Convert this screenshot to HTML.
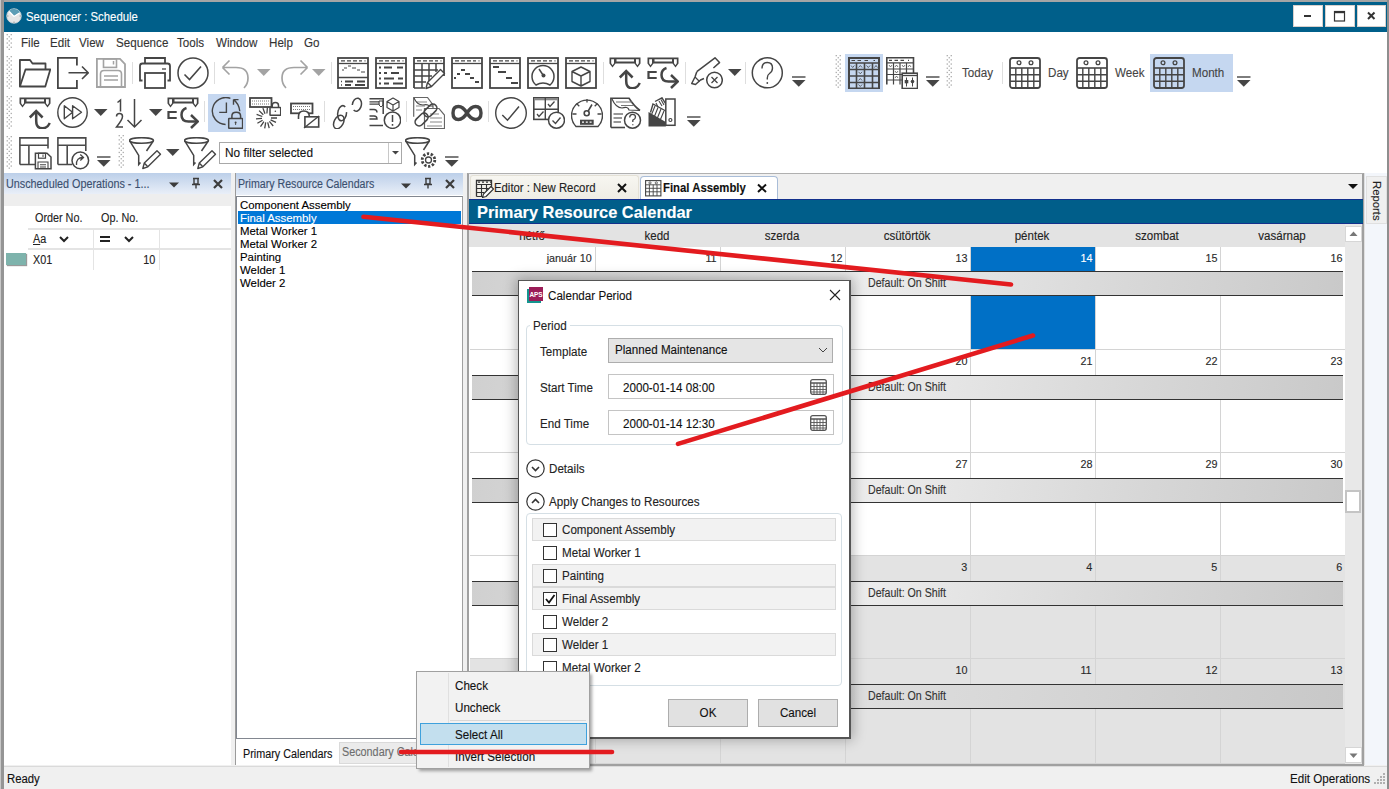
<!DOCTYPE html><html><head><meta charset="utf-8"><style>
html,body{margin:0;padding:0;}
body{width:1389px;height:789px;position:relative;overflow:hidden;background:#fff;font-family:"Liberation Sans", sans-serif;}
div{box-sizing:border-box;-webkit-text-stroke:0.12px currentColor;}
</style></head><body>
<div style="position:absolute;left:0px;top:0px;width:1389px;height:789px;background:#f0f0f0"></div>
<div style="position:absolute;left:0px;top:0px;width:1389px;height:2px;background:#a5a5a5"></div>
<div style="position:absolute;left:0px;top:0px;width:4px;height:789px;background:#959595;border-left:1px solid #c8c8c8"></div>
<div style="position:absolute;left:1387px;top:0px;width:2px;height:789px;background:#8e8e8e"></div>
<div style="position:absolute;left:4px;top:2px;width:1383px;height:30px;background:#005f8a"></div>
<div style="position:absolute;left:26px;top:10px;font-size:12.5px;line-height:14px;height:14px;color:#fff;white-space:nowrap;transform-origin:0 0;transform:scaleX(0.91);">Sequencer : Schedule</div>
<div style="position:absolute;left:4px;top:32px;width:1383px;height:141px;background:#fff"></div>
<div style="position:absolute;left:1293px;top:5px;width:30px;height:22px;background:#fff;border:1px solid #d8d0cc"></div>
<div style="position:absolute;left:1325px;top:5px;width:30px;height:22px;background:#fff;border:1px solid #d8d0cc"></div>
<div style="position:absolute;left:1357px;top:5px;width:29px;height:22px;background:#fff;border:1px solid #d8d0cc"></div>
<svg style="position:absolute;left:1293px;top:5px;" width="30" height="22" viewBox="0 0 30 22" fill="none" stroke="#444" stroke-width="1.5"><path d="M11 11 H18" stroke="#333" stroke-width="2"/></svg>
<svg style="position:absolute;left:1325px;top:5px;" width="30" height="22" viewBox="0 0 30 22" fill="none" stroke="#444" stroke-width="1.5"><rect x="9.5" y="6.5" width="10" height="9.5" stroke="#333" stroke-width="1.2"/><path d="M9 7.3 H20" stroke="#333" stroke-width="1.8"/></svg>
<svg style="position:absolute;left:1357px;top:5px;" width="29" height="22" viewBox="0 0 29 22" fill="none" stroke="#444" stroke-width="1.5"><path d="M11 7.5 L17.5 14 M17.5 7.5 L11 14" stroke="#333" stroke-width="2"/></svg>
<svg style="position:absolute;left:6px;top:8px;" width="16" height="16" viewBox="0 0 16 16" fill="none" stroke="#444" stroke-width="1.5"><circle cx="8" cy="8" r="7.3" fill="#e6e6e6" stroke="#c9d3d8" stroke-width="0.8"/><path d="M8 8 L3 3 A7.1 7.1 0 0 1 14.2 4.4 Z" fill="#5d9db5" stroke="none"/><path d="M8 8.5 L3.2 3.5 M8 8.5 L13.8 4.8" stroke="#fff" stroke-width="1.3"/><path d="M8 13.5 V15 M1 8 H2.5 M13.5 8 H15" stroke="#888" stroke-width="0.8"/></svg>
<div style="position:absolute;left:21px;top:36px;font-size:12.5px;line-height:14px;height:14px;color:#333;white-space:nowrap;transform-origin:0 0;transform:scaleX(0.93);">File</div>
<div style="position:absolute;left:50px;top:36px;font-size:12.5px;line-height:14px;height:14px;color:#333;white-space:nowrap;transform-origin:0 0;transform:scaleX(0.93);">Edit</div>
<div style="position:absolute;left:79px;top:36px;font-size:12.5px;line-height:14px;height:14px;color:#333;white-space:nowrap;transform-origin:0 0;transform:scaleX(0.93);">View</div>
<div style="position:absolute;left:116px;top:36px;font-size:12.5px;line-height:14px;height:14px;color:#333;white-space:nowrap;transform-origin:0 0;transform:scaleX(0.93);">Sequence</div>
<div style="position:absolute;left:177px;top:36px;font-size:12.5px;line-height:14px;height:14px;color:#333;white-space:nowrap;transform-origin:0 0;transform:scaleX(0.93);">Tools</div>
<div style="position:absolute;left:216px;top:36px;font-size:12.5px;line-height:14px;height:14px;color:#333;white-space:nowrap;transform-origin:0 0;transform:scaleX(0.93);">Window</div>
<div style="position:absolute;left:269px;top:36px;font-size:12.5px;line-height:14px;height:14px;color:#333;white-space:nowrap;transform-origin:0 0;transform:scaleX(0.93);">Help</div>
<div style="position:absolute;left:304px;top:36px;font-size:12.5px;line-height:14px;height:14px;color:#333;white-space:nowrap;transform-origin:0 0;transform:scaleX(0.93);">Go</div>
<svg style="position:absolute;left:6px;top:34px;stroke:none" width="7" height="18" viewBox="0 0 7 18" fill="none" stroke="#444" stroke-width="1.5"><rect x="0.6" y="0.0" width="1.3" height="1.3" fill="#aaaaaa"/><rect x="4.6" y="0.0" width="1.3" height="1.3" fill="#aaaaaa"/><rect x="2.6" y="2.1" width="1.3" height="1.3" fill="#aaaaaa"/><rect x="0.6" y="4.2" width="1.3" height="1.3" fill="#aaaaaa"/><rect x="4.6" y="4.2" width="1.3" height="1.3" fill="#aaaaaa"/><rect x="2.6" y="6.3" width="1.3" height="1.3" fill="#aaaaaa"/><rect x="0.6" y="8.4" width="1.3" height="1.3" fill="#aaaaaa"/><rect x="4.6" y="8.4" width="1.3" height="1.3" fill="#aaaaaa"/><rect x="2.6" y="10.5" width="1.3" height="1.3" fill="#aaaaaa"/><rect x="0.6" y="12.6" width="1.3" height="1.3" fill="#aaaaaa"/><rect x="4.6" y="12.6" width="1.3" height="1.3" fill="#aaaaaa"/><rect x="2.6" y="14.7" width="1.3" height="1.3" fill="#aaaaaa"/></svg>
<svg style="position:absolute;left:6px;top:56px;stroke:none" width="7" height="34" viewBox="0 0 7 34" fill="none" stroke="#444" stroke-width="1.5"><rect x="0.6" y="0.0" width="1.3" height="1.3" fill="#aaaaaa"/><rect x="4.6" y="0.0" width="1.3" height="1.3" fill="#aaaaaa"/><rect x="2.6" y="2.1" width="1.3" height="1.3" fill="#aaaaaa"/><rect x="0.6" y="4.2" width="1.3" height="1.3" fill="#aaaaaa"/><rect x="4.6" y="4.2" width="1.3" height="1.3" fill="#aaaaaa"/><rect x="2.6" y="6.3" width="1.3" height="1.3" fill="#aaaaaa"/><rect x="0.6" y="8.4" width="1.3" height="1.3" fill="#aaaaaa"/><rect x="4.6" y="8.4" width="1.3" height="1.3" fill="#aaaaaa"/><rect x="2.6" y="10.5" width="1.3" height="1.3" fill="#aaaaaa"/><rect x="0.6" y="12.6" width="1.3" height="1.3" fill="#aaaaaa"/><rect x="4.6" y="12.6" width="1.3" height="1.3" fill="#aaaaaa"/><rect x="2.6" y="14.7" width="1.3" height="1.3" fill="#aaaaaa"/><rect x="0.6" y="16.8" width="1.3" height="1.3" fill="#aaaaaa"/><rect x="4.6" y="16.8" width="1.3" height="1.3" fill="#aaaaaa"/><rect x="2.6" y="18.9" width="1.3" height="1.3" fill="#aaaaaa"/><rect x="0.6" y="21.0" width="1.3" height="1.3" fill="#aaaaaa"/><rect x="4.6" y="21.0" width="1.3" height="1.3" fill="#aaaaaa"/><rect x="2.6" y="23.1" width="1.3" height="1.3" fill="#aaaaaa"/><rect x="0.6" y="25.2" width="1.3" height="1.3" fill="#aaaaaa"/><rect x="4.6" y="25.2" width="1.3" height="1.3" fill="#aaaaaa"/><rect x="2.6" y="27.3" width="1.3" height="1.3" fill="#aaaaaa"/><rect x="0.6" y="29.4" width="1.3" height="1.3" fill="#aaaaaa"/><rect x="4.6" y="29.4" width="1.3" height="1.3" fill="#aaaaaa"/><rect x="2.6" y="31.5" width="1.3" height="1.3" fill="#aaaaaa"/></svg>
<svg style="position:absolute;left:6px;top:96px;stroke:none" width="7" height="34" viewBox="0 0 7 34" fill="none" stroke="#444" stroke-width="1.5"><rect x="0.6" y="0.0" width="1.3" height="1.3" fill="#aaaaaa"/><rect x="4.6" y="0.0" width="1.3" height="1.3" fill="#aaaaaa"/><rect x="2.6" y="2.1" width="1.3" height="1.3" fill="#aaaaaa"/><rect x="0.6" y="4.2" width="1.3" height="1.3" fill="#aaaaaa"/><rect x="4.6" y="4.2" width="1.3" height="1.3" fill="#aaaaaa"/><rect x="2.6" y="6.3" width="1.3" height="1.3" fill="#aaaaaa"/><rect x="0.6" y="8.4" width="1.3" height="1.3" fill="#aaaaaa"/><rect x="4.6" y="8.4" width="1.3" height="1.3" fill="#aaaaaa"/><rect x="2.6" y="10.5" width="1.3" height="1.3" fill="#aaaaaa"/><rect x="0.6" y="12.6" width="1.3" height="1.3" fill="#aaaaaa"/><rect x="4.6" y="12.6" width="1.3" height="1.3" fill="#aaaaaa"/><rect x="2.6" y="14.7" width="1.3" height="1.3" fill="#aaaaaa"/><rect x="0.6" y="16.8" width="1.3" height="1.3" fill="#aaaaaa"/><rect x="4.6" y="16.8" width="1.3" height="1.3" fill="#aaaaaa"/><rect x="2.6" y="18.9" width="1.3" height="1.3" fill="#aaaaaa"/><rect x="0.6" y="21.0" width="1.3" height="1.3" fill="#aaaaaa"/><rect x="4.6" y="21.0" width="1.3" height="1.3" fill="#aaaaaa"/><rect x="2.6" y="23.1" width="1.3" height="1.3" fill="#aaaaaa"/><rect x="0.6" y="25.2" width="1.3" height="1.3" fill="#aaaaaa"/><rect x="4.6" y="25.2" width="1.3" height="1.3" fill="#aaaaaa"/><rect x="2.6" y="27.3" width="1.3" height="1.3" fill="#aaaaaa"/><rect x="0.6" y="29.4" width="1.3" height="1.3" fill="#aaaaaa"/><rect x="4.6" y="29.4" width="1.3" height="1.3" fill="#aaaaaa"/><rect x="2.6" y="31.5" width="1.3" height="1.3" fill="#aaaaaa"/></svg>
<svg style="position:absolute;left:6px;top:136px;stroke:none" width="7" height="34" viewBox="0 0 7 34" fill="none" stroke="#444" stroke-width="1.5"><rect x="0.6" y="0.0" width="1.3" height="1.3" fill="#aaaaaa"/><rect x="4.6" y="0.0" width="1.3" height="1.3" fill="#aaaaaa"/><rect x="2.6" y="2.1" width="1.3" height="1.3" fill="#aaaaaa"/><rect x="0.6" y="4.2" width="1.3" height="1.3" fill="#aaaaaa"/><rect x="4.6" y="4.2" width="1.3" height="1.3" fill="#aaaaaa"/><rect x="2.6" y="6.3" width="1.3" height="1.3" fill="#aaaaaa"/><rect x="0.6" y="8.4" width="1.3" height="1.3" fill="#aaaaaa"/><rect x="4.6" y="8.4" width="1.3" height="1.3" fill="#aaaaaa"/><rect x="2.6" y="10.5" width="1.3" height="1.3" fill="#aaaaaa"/><rect x="0.6" y="12.6" width="1.3" height="1.3" fill="#aaaaaa"/><rect x="4.6" y="12.6" width="1.3" height="1.3" fill="#aaaaaa"/><rect x="2.6" y="14.7" width="1.3" height="1.3" fill="#aaaaaa"/><rect x="0.6" y="16.8" width="1.3" height="1.3" fill="#aaaaaa"/><rect x="4.6" y="16.8" width="1.3" height="1.3" fill="#aaaaaa"/><rect x="2.6" y="18.9" width="1.3" height="1.3" fill="#aaaaaa"/><rect x="0.6" y="21.0" width="1.3" height="1.3" fill="#aaaaaa"/><rect x="4.6" y="21.0" width="1.3" height="1.3" fill="#aaaaaa"/><rect x="2.6" y="23.1" width="1.3" height="1.3" fill="#aaaaaa"/><rect x="0.6" y="25.2" width="1.3" height="1.3" fill="#aaaaaa"/><rect x="4.6" y="25.2" width="1.3" height="1.3" fill="#aaaaaa"/><rect x="2.6" y="27.3" width="1.3" height="1.3" fill="#aaaaaa"/><rect x="0.6" y="29.4" width="1.3" height="1.3" fill="#aaaaaa"/><rect x="4.6" y="29.4" width="1.3" height="1.3" fill="#aaaaaa"/><rect x="2.6" y="31.5" width="1.3" height="1.3" fill="#aaaaaa"/></svg>
<svg style="position:absolute;left:118px;top:135px;stroke:none" width="7" height="34" viewBox="0 0 7 34" fill="none" stroke="#444" stroke-width="1.5"><rect x="0.6" y="0.0" width="1.3" height="1.3" fill="#aaaaaa"/><rect x="4.6" y="0.0" width="1.3" height="1.3" fill="#aaaaaa"/><rect x="2.6" y="2.1" width="1.3" height="1.3" fill="#aaaaaa"/><rect x="0.6" y="4.2" width="1.3" height="1.3" fill="#aaaaaa"/><rect x="4.6" y="4.2" width="1.3" height="1.3" fill="#aaaaaa"/><rect x="2.6" y="6.3" width="1.3" height="1.3" fill="#aaaaaa"/><rect x="0.6" y="8.4" width="1.3" height="1.3" fill="#aaaaaa"/><rect x="4.6" y="8.4" width="1.3" height="1.3" fill="#aaaaaa"/><rect x="2.6" y="10.5" width="1.3" height="1.3" fill="#aaaaaa"/><rect x="0.6" y="12.6" width="1.3" height="1.3" fill="#aaaaaa"/><rect x="4.6" y="12.6" width="1.3" height="1.3" fill="#aaaaaa"/><rect x="2.6" y="14.7" width="1.3" height="1.3" fill="#aaaaaa"/><rect x="0.6" y="16.8" width="1.3" height="1.3" fill="#aaaaaa"/><rect x="4.6" y="16.8" width="1.3" height="1.3" fill="#aaaaaa"/><rect x="2.6" y="18.9" width="1.3" height="1.3" fill="#aaaaaa"/><rect x="0.6" y="21.0" width="1.3" height="1.3" fill="#aaaaaa"/><rect x="4.6" y="21.0" width="1.3" height="1.3" fill="#aaaaaa"/><rect x="2.6" y="23.1" width="1.3" height="1.3" fill="#aaaaaa"/><rect x="0.6" y="25.2" width="1.3" height="1.3" fill="#aaaaaa"/><rect x="4.6" y="25.2" width="1.3" height="1.3" fill="#aaaaaa"/><rect x="2.6" y="27.3" width="1.3" height="1.3" fill="#aaaaaa"/><rect x="0.6" y="29.4" width="1.3" height="1.3" fill="#aaaaaa"/><rect x="4.6" y="29.4" width="1.3" height="1.3" fill="#aaaaaa"/><rect x="2.6" y="31.5" width="1.3" height="1.3" fill="#aaaaaa"/></svg>
<svg style="position:absolute;left:835px;top:55px;stroke:none" width="7" height="34" viewBox="0 0 7 34" fill="none" stroke="#444" stroke-width="1.5"><rect x="0.6" y="0.0" width="1.3" height="1.3" fill="#aaaaaa"/><rect x="4.6" y="0.0" width="1.3" height="1.3" fill="#aaaaaa"/><rect x="2.6" y="2.1" width="1.3" height="1.3" fill="#aaaaaa"/><rect x="0.6" y="4.2" width="1.3" height="1.3" fill="#aaaaaa"/><rect x="4.6" y="4.2" width="1.3" height="1.3" fill="#aaaaaa"/><rect x="2.6" y="6.3" width="1.3" height="1.3" fill="#aaaaaa"/><rect x="0.6" y="8.4" width="1.3" height="1.3" fill="#aaaaaa"/><rect x="4.6" y="8.4" width="1.3" height="1.3" fill="#aaaaaa"/><rect x="2.6" y="10.5" width="1.3" height="1.3" fill="#aaaaaa"/><rect x="0.6" y="12.6" width="1.3" height="1.3" fill="#aaaaaa"/><rect x="4.6" y="12.6" width="1.3" height="1.3" fill="#aaaaaa"/><rect x="2.6" y="14.7" width="1.3" height="1.3" fill="#aaaaaa"/><rect x="0.6" y="16.8" width="1.3" height="1.3" fill="#aaaaaa"/><rect x="4.6" y="16.8" width="1.3" height="1.3" fill="#aaaaaa"/><rect x="2.6" y="18.9" width="1.3" height="1.3" fill="#aaaaaa"/><rect x="0.6" y="21.0" width="1.3" height="1.3" fill="#aaaaaa"/><rect x="4.6" y="21.0" width="1.3" height="1.3" fill="#aaaaaa"/><rect x="2.6" y="23.1" width="1.3" height="1.3" fill="#aaaaaa"/><rect x="0.6" y="25.2" width="1.3" height="1.3" fill="#aaaaaa"/><rect x="4.6" y="25.2" width="1.3" height="1.3" fill="#aaaaaa"/><rect x="2.6" y="27.3" width="1.3" height="1.3" fill="#aaaaaa"/><rect x="0.6" y="29.4" width="1.3" height="1.3" fill="#aaaaaa"/><rect x="4.6" y="29.4" width="1.3" height="1.3" fill="#aaaaaa"/><rect x="2.6" y="31.5" width="1.3" height="1.3" fill="#aaaaaa"/></svg>
<svg style="position:absolute;left:946px;top:55px;stroke:none" width="7" height="34" viewBox="0 0 7 34" fill="none" stroke="#444" stroke-width="1.5"><rect x="0.6" y="0.0" width="1.3" height="1.3" fill="#aaaaaa"/><rect x="4.6" y="0.0" width="1.3" height="1.3" fill="#aaaaaa"/><rect x="2.6" y="2.1" width="1.3" height="1.3" fill="#aaaaaa"/><rect x="0.6" y="4.2" width="1.3" height="1.3" fill="#aaaaaa"/><rect x="4.6" y="4.2" width="1.3" height="1.3" fill="#aaaaaa"/><rect x="2.6" y="6.3" width="1.3" height="1.3" fill="#aaaaaa"/><rect x="0.6" y="8.4" width="1.3" height="1.3" fill="#aaaaaa"/><rect x="4.6" y="8.4" width="1.3" height="1.3" fill="#aaaaaa"/><rect x="2.6" y="10.5" width="1.3" height="1.3" fill="#aaaaaa"/><rect x="0.6" y="12.6" width="1.3" height="1.3" fill="#aaaaaa"/><rect x="4.6" y="12.6" width="1.3" height="1.3" fill="#aaaaaa"/><rect x="2.6" y="14.7" width="1.3" height="1.3" fill="#aaaaaa"/><rect x="0.6" y="16.8" width="1.3" height="1.3" fill="#aaaaaa"/><rect x="4.6" y="16.8" width="1.3" height="1.3" fill="#aaaaaa"/><rect x="2.6" y="18.9" width="1.3" height="1.3" fill="#aaaaaa"/><rect x="0.6" y="21.0" width="1.3" height="1.3" fill="#aaaaaa"/><rect x="4.6" y="21.0" width="1.3" height="1.3" fill="#aaaaaa"/><rect x="2.6" y="23.1" width="1.3" height="1.3" fill="#aaaaaa"/><rect x="0.6" y="25.2" width="1.3" height="1.3" fill="#aaaaaa"/><rect x="4.6" y="25.2" width="1.3" height="1.3" fill="#aaaaaa"/><rect x="2.6" y="27.3" width="1.3" height="1.3" fill="#aaaaaa"/><rect x="0.6" y="29.4" width="1.3" height="1.3" fill="#aaaaaa"/><rect x="4.6" y="29.4" width="1.3" height="1.3" fill="#aaaaaa"/><rect x="2.6" y="31.5" width="1.3" height="1.3" fill="#aaaaaa"/></svg>
<svg style="position:absolute;left:19px;top:57px;" width="32" height="32" viewBox="0 0 32 32" fill="none" stroke="#444" stroke-width="1.5"><path d="M0.9 29.5 V3 H11 L13.5 6.5 H26.5 V12.5" stroke="#454545" stroke-width="1.8" stroke-linejoin="round"/><path d="M0.9 29.5 L6.5 12.5 H31.3 L26.3 29.5 Z" stroke="#454545" stroke-width="1.8" stroke-linejoin="round"/></svg>
<svg style="position:absolute;left:57px;top:57px;" width="32" height="32" viewBox="0 0 32 32" fill="none" stroke="#444" stroke-width="1.5"><path d="M19.9 8.5 V0.9 H0.9 V31.1 H19.9 V23" stroke="#454545" stroke-width="1.8"/><path d="M11.5 15.8 H31 M25 9.5 L31.2 15.8 L25 22" stroke="#454545" stroke-width="1.6"/></svg>
<svg style="position:absolute;left:95px;top:57px;" width="32" height="32" viewBox="0 0 32 32" fill="none" stroke="#444" stroke-width="1.5"><path d="M1.9 1.9 H25 L30 7 V30 H1.9 Z" stroke="#a3a3a3" stroke-width="1.8"/><rect x="8.5" y="1.9" width="13" height="8.5" stroke="#a3a3a3" stroke-width="1.6"/><path d="M18.5 4 V7.5" stroke="#a3a3a3" stroke-width="1.5"/><path d="M5.5 30 V17 Q5.5 13.5 9 13.5 H23 Q26.5 13.5 26.5 17 V30" stroke="#a3a3a3" stroke-width="1.6"/><path d="M9 19 H23 M9 23 H23" stroke="#a3a3a3" stroke-width="1.4"/></svg>
<div style="position:absolute;left:132px;top:62px;width:1px;height:22px;background:#dedede"></div>
<svg style="position:absolute;left:139px;top:57px;" width="32" height="32" viewBox="0 0 32 32" fill="none" stroke="#444" stroke-width="1.5"><path d="M6 6 V1 H26 V6" stroke="#454545" stroke-width="1.8"/><path d="M3.5 23.5 H1 V9 Q1 6.5 3.5 6.5 H28.5 Q31 6.5 31 9 V23.5 H28.5" stroke="#454545" stroke-width="1.8"/><rect x="6" y="16" width="20" height="15" stroke="#454545" stroke-width="1.8"/><path d="M23 12 H27" stroke="#454545" stroke-width="1.3"/></svg>
<svg style="position:absolute;left:177px;top:57px;" width="32" height="32" viewBox="0 0 32 32" fill="none" stroke="#444" stroke-width="1.5"><circle cx="16" cy="16" r="15" stroke="#454545" stroke-width="1.5"/><path d="M7.5 17.5 L12.5 22.5 L24 9.5" stroke="#454545" stroke-width="1.6"/></svg>
<div style="position:absolute;left:214px;top:62px;width:1px;height:22px;background:#dedede"></div>
<svg style="position:absolute;left:221px;top:57px;" width="30" height="32" viewBox="0 0 30 32" fill="none" stroke="#444" stroke-width="1.5"><path d="M1.5 10.5 L8.5 3.5 M1.5 10.5 L8.5 17.5 M1.5 10.5 H15 Q27 10.5 27 21 Q27 27 23 31" stroke="#a3a3a3" stroke-width="1.7" fill="none"/></svg>
<svg style="position:absolute;left:257px;top:69px;" width="14" height="8" viewBox="0 0 14 8" fill="none" stroke="#444" stroke-width="1.5"><path d="M0 0 H13.5 L6.75 7 Z" fill="#a3a3a3" stroke="none"/></svg>
<svg style="position:absolute;left:279px;top:57px;" width="30" height="32" viewBox="0 0 30 32" fill="none" stroke="#444" stroke-width="1.5"><path d="M28.5 10.5 L21.5 3.5 M28.5 10.5 L21.5 17.5 M28.5 10.5 H15 Q3 10.5 3 21 Q3 27 7 31" stroke="#a3a3a3" stroke-width="1.7" fill="none"/></svg>
<svg style="position:absolute;left:312px;top:69px;" width="14" height="8" viewBox="0 0 14 8" fill="none" stroke="#444" stroke-width="1.5"><path d="M0 0 H13.5 L6.75 7 Z" fill="#a3a3a3" stroke="none"/></svg>
<div style="position:absolute;left:331px;top:62px;width:1px;height:22px;background:#dedede"></div>
<svg style="position:absolute;left:337px;top:57px;" width="32" height="32" viewBox="0 0 32 32" fill="none" stroke="#444" stroke-width="1.5"><rect x="1" y="1" width="30" height="30" stroke="#454545" stroke-width="1.8"/><path d="M1 6.5 H31" stroke="#454545" stroke-width="1.3"/><path d="M4 3.8 H8 M10 3.8 H14 M16 3.8 H20 M22 3.8 H25 M27.5 3.8 H28.5" stroke="#454545" stroke-width="1.3"/><path d="M1 20.5 H31" stroke="#454545" stroke-width="1.5"/><path d="M5 13 H7 M7 11 H10 M11 9 H14 M15 11 H19 M20 13 H23 M24 15 H28" stroke="#454545" stroke-width="1"/><path d="M4 24.5 H5 M4 28 H5" stroke="#454545" stroke-width="1.5"/><path d="M8 24.5 H16 M20 24.5 H28 M8 28 H14 M18 28 H28" stroke="#454545" stroke-width="2.2"/></svg>
<svg style="position:absolute;left:375px;top:57px;" width="32" height="32" viewBox="0 0 32 32" fill="none" stroke="#444" stroke-width="1.5"><rect x="1" y="1" width="30" height="30" stroke="#454545" stroke-width="1.8"/><path d="M1 6.5 H31" stroke="#454545" stroke-width="1.3"/><path d="M4 3.8 H8 M10 3.8 H14 M16 3.8 H20 M22 3.8 H25 M27.5 3.8 H28.5" stroke="#454545" stroke-width="1.3"/><path d="M4 10.5 H6 M4 16 H6 M4 21.5 H6 M4 26.5 H6" stroke="#454545" stroke-width="2"/><path d="M9 10.5 H17 M22 10.5 H28 M9 16 H12 M16 16 H24 M9 21.5 H19 M23 21.5 H28 M9 26.5 H14 M18 26.5 H28" stroke="#454545" stroke-width="2.2"/></svg>
<svg style="position:absolute;left:413px;top:57px;" width="33" height="33" viewBox="0 0 33 33" fill="none" stroke="#444" stroke-width="1.5"><path d="M1 31 V1 H31 V19" stroke="#454545" stroke-width="1.8"/><path d="M1 6.5 H31" stroke="#454545" stroke-width="1.3"/><path d="M4 3.8 H8 M10 3.8 H14 M16 3.8 H20 M22 3.8 H25 M27.5 3.8 H28.5" stroke="#454545" stroke-width="1.3"/><path d="M1 13 H25 M1 19 H19 M1 25 H13 M1 31 H12 M9 7 V31 M16 7 V24 M23 7 V15" stroke="#454545" stroke-width="1.5"/><path d="M13 31.5 L14.5 25.5 L27.5 12.5 L31.5 16.5 L18.5 29.5 Z M14.5 25.5 L18.5 29.5" fill="#fff" stroke="#454545" stroke-width="1.4" stroke-linejoin="round"/></svg>
<svg style="position:absolute;left:451px;top:57px;" width="32" height="32" viewBox="0 0 32 32" fill="none" stroke="#444" stroke-width="1.5"><rect x="1" y="1" width="30" height="30" stroke="#454545" stroke-width="1.8"/><path d="M1 6.5 H31" stroke="#454545" stroke-width="1.3"/><path d="M4 3.8 H8 M10 3.8 H14 M16 3.8 H20 M22 3.8 H25 M27.5 3.8 H28.5" stroke="#454545" stroke-width="1.3"/><path d="M3 21 H5 M6 17 H9 M10 13 H14 M14 17 H19 M19 21 H23 M24 25 H28" stroke="#454545" stroke-width="2"/></svg>
<svg style="position:absolute;left:489px;top:57px;" width="32" height="32" viewBox="0 0 32 32" fill="none" stroke="#444" stroke-width="1.5"><rect x="1" y="1" width="30" height="30" stroke="#454545" stroke-width="1.8"/><path d="M1 6.5 H31" stroke="#454545" stroke-width="1.3"/><path d="M4 3.8 H8 M10 3.8 H14 M16 3.8 H20 M22 3.8 H25 M27.5 3.8 H28.5" stroke="#454545" stroke-width="1.3"/><path d="M4 10 H10 M9 15 H17 M17 21 H23 M22 26 H29" stroke="#454545" stroke-width="2.2"/></svg>
<svg style="position:absolute;left:527px;top:57px;" width="32" height="32" viewBox="0 0 32 32" fill="none" stroke="#444" stroke-width="1.5"><rect x="1" y="1" width="30" height="30" stroke="#454545" stroke-width="1.8"/><path d="M1 6.5 H31" stroke="#454545" stroke-width="1.3"/><path d="M4 3.8 H8 M10 3.8 H14 M16 3.8 H20 M22 3.8 H25 M27.5 3.8 H28.5" stroke="#454545" stroke-width="1.3"/><path d="M9 28 A11 11 0 1 1 23 28 Q16 24 9 28 Z" stroke="#454545" stroke-width="1.5"/><path d="M12 12 L16 18" stroke="#454545" stroke-width="1.5"/><circle cx="16.5" cy="18.5" r="2" fill="#454545" stroke="none"/></svg>
<svg style="position:absolute;left:565px;top:57px;" width="32" height="32" viewBox="0 0 32 32" fill="none" stroke="#444" stroke-width="1.5"><rect x="1" y="1" width="30" height="30" stroke="#454545" stroke-width="1.8"/><path d="M1 6.5 H31" stroke="#454545" stroke-width="1.3"/><path d="M4 3.8 H8 M10 3.8 H14 M16 3.8 H20 M22 3.8 H25 M27.5 3.8 H28.5" stroke="#454545" stroke-width="1.3"/><path d="M16 10 L25 14.5 V24.5 L16 29 L7 24.5 V14.5 Z M7 14.5 L16 19 L25 14.5 M16 19 V29" stroke="#454545" stroke-width="1.4" stroke-linejoin="round"/></svg>
<div style="position:absolute;left:603px;top:62px;width:1px;height:22px;background:#dedede"></div>
<svg style="position:absolute;left:609px;top:57px;" width="32" height="32" viewBox="0 0 32 32" fill="none" stroke="#444" stroke-width="1.5"><path d="M0.5 0.5 H31.5 V6.5 L28.5 10.5 L25.5 6.5 H6.5 L3.5 10.5 L0.5 6.5 Z" fill="#454545" stroke="none"/><path d="M2.2 2.2 H5 V6.2 L3.5 8.2 L2.2 6.2 Z M27 2.2 H29.8 V6.2 L28.5 8.2 L27 6.2 Z" fill="#fff" stroke="none"/><rect x="7.5" y="2.3" width="17.5" height="2.2" fill="#fff" stroke="none"/><path d="M17.2 14 V24 Q17.2 31.3 23.5 31.3 Q28.3 31.3 30.8 26" stroke="#454545" stroke-width="2.5"/><path d="M10.8 20.5 L17.2 14 L23.6 20.5" stroke="#454545" stroke-width="2.5"/></svg>
<svg style="position:absolute;left:647px;top:57px;" width="32" height="32" viewBox="0 0 32 32" fill="none" stroke="#444" stroke-width="1.5"><path d="M0.5 0.5 H31.5 V6.5 L28.5 10.5 L25.5 6.5 H6.5 L3.5 10.5 L0.5 6.5 Z" fill="#454545" stroke="none"/><path d="M2.2 2.2 H5 V6.2 L3.5 8.2 L2.2 6.2 Z M27 2.2 H29.8 V6.2 L28.5 8.2 L27 6.2 Z" fill="#fff" stroke="none"/><rect x="7.5" y="2.3" width="17.5" height="2.2" fill="#fff" stroke="none"/><path d="M9.7 15 H1.5 V21 H9.7" stroke="#454545" stroke-width="2.2"/><path d="M19.5 11 Q14.5 12.5 14.5 18 Q14.5 24.5 21.5 24.5 H30.5" stroke="#454545" stroke-width="2.5"/><path d="M24 18 L30.8 24.5 L24 31" stroke="#454545" stroke-width="2.5"/></svg>
<div style="position:absolute;left:685px;top:62px;width:1px;height:22px;background:#dedede"></div>
<svg style="position:absolute;left:691px;top:57px;" width="32" height="33" viewBox="0 0 32 33" fill="none" stroke="#444" stroke-width="1.5"><path d="M5.8 14.7 L24 0.8 L28.5 5.6 L22.4 11" stroke="#454545" stroke-width="1.5" stroke-linejoin="round"/><path d="M5.8 14.7 L4 20 L0.7 26.5 L4.5 27.5 L9.5 23 L13 21.5" stroke="#454545" stroke-width="1.5" stroke-linejoin="round"/><path d="M4 20 L8.5 24.5" stroke="#454545" stroke-width="1.3"/><circle cx="23.5" cy="23" r="7.8" fill="#fff" stroke="#454545" stroke-width="1.5"/><path d="M20.5 20 L26.5 26 M26.5 20 L20.5 26" stroke="#454545" stroke-width="1.3"/></svg>
<svg style="position:absolute;left:728px;top:69px;" width="14" height="8" viewBox="0 0 14 8" fill="none" stroke="#444" stroke-width="1.5"><path d="M0 0 H13.5 L6.75 7 Z" fill="#454545" stroke="none"/></svg>
<div style="position:absolute;left:745px;top:62px;width:1px;height:22px;background:#dedede"></div>
<svg style="position:absolute;left:751px;top:57px;" width="33" height="32" viewBox="0 0 33 32" fill="none" stroke="#444" stroke-width="1.5"><circle cx="16.3" cy="15.8" r="15" stroke="#454545" stroke-width="1.5"/><path d="M11 11.5 Q11 5.5 16.3 5.5 Q21.5 5.5 21.5 11 Q21.5 14.5 18.5 16.5 Q16.3 18 16.3 21 V22.5" stroke="#454545" stroke-width="1.4"/><circle cx="16.3" cy="26" r="0.9" fill="#454545" stroke="none"/></svg>
<svg style="position:absolute;left:792px;top:76px;" width="14" height="12" viewBox="0 0 14 12" fill="none" stroke="#444" stroke-width="1.5"><path d="M0 1 H13.5" stroke="#454545" stroke-width="1.4"/><path d="M0 4 H13.5 L6.75 10.8 Z" fill="#454545" stroke="none"/></svg>
<div style="position:absolute;left:845px;top:54px;width:38px;height:38px;background:#c5d7f0"></div>
<svg style="position:absolute;left:848px;top:57px;" width="32" height="32" viewBox="0 0 32 32" fill="none" stroke="#444" stroke-width="1.5"><rect x="1" y="1" width="30" height="30.5" stroke="#454545" stroke-width="2" fill="none"/><path d="M1 6 H31 M1 12.5 H31 M1 19 H31 M1 25.5 H31 M8.5 6 V31.5 M16.5 6 V31.5 M24.5 6 V31.5" stroke="#454545" stroke-width="1.6"/><path d="M3.5 3.5 H7 M9.5 3.5 H13 M16.5 3.5 H20 M25.5 3.5 H27" stroke="#454545" stroke-width="1.2"/><path d="M3 8.5 L4.7 10.5 L6.4 8.5 M10.5 10.5 L12.3 8.5 L14.1 10.5 M18.5 8.5 L20.3 10.5 L22.1 8.5 M26.5 10.5 L28 8.5 L29.5 10.5 M10.5 14.8 L12.3 16.8 L14.1 14.8 M10.5 23.5 L12.3 21.5 L14.1 23.5 M10.5 27.5 L12.3 29.5 L14.1 27.5" stroke="#454545" stroke-width="0.8"/></svg>
<svg style="position:absolute;left:886px;top:57px;" width="32" height="32" viewBox="0 0 32 32" fill="none" stroke="#444" stroke-width="1.5"><path d="M0.8 27.5 V0.8 H27.5 V16" stroke="#454545" stroke-width="1.6"/><path d="M0.8 5.8 H27.5 M0.8 12 H27.5 M0.8 17.5 H16 M0.8 23 H16 M7.5 6 V27.5 M14 6 V27.5 M20.5 6 V16" stroke="#454545" stroke-width="1.2"/><path d="M3 3.3 H6 M8.5 3.3 H12 M14.5 3.3 H18 M22 3.3 H23" stroke="#454545" stroke-width="1.2"/><path d="M3 8 L4.5 10 L6 8 M9 10 L10.5 8 L12 10 M16 8 L17.5 10 L19 8 M22 10 L23.5 8 L25 10 M9 14 L10.5 16 L12 14 M9 21 L10.5 19 L12 21" stroke="#454545" stroke-width="0.7"/><rect x="16.2" y="16.2" width="15.3" height="15.3" fill="#fff" stroke="#454545" stroke-width="1.6"/><path d="M16.2 18.5 H31.5" stroke="#454545" stroke-width="1.3"/><path d="M20.5 20.5 V29.5 M26.5 20.5 V29.5" stroke="#454545" stroke-width="1"/><rect x="18.7" y="23" width="3.6" height="3.3" fill="#454545" stroke="none"/><circle cx="26.5" cy="24.6" r="1.8" fill="#454545" stroke="none"/></svg>
<svg style="position:absolute;left:926px;top:76px;" width="14" height="12" viewBox="0 0 14 12" fill="none" stroke="#444" stroke-width="1.5"><path d="M0 1 H13.5" stroke="#454545" stroke-width="1.4"/><path d="M0 4 H13.5 L6.75 10.8 Z" fill="#454545" stroke="none"/></svg>
<div style="position:absolute;left:962px;top:66px;font-size:12.5px;line-height:14px;height:14px;color:#444;white-space:nowrap;transform-origin:0 0;transform:scaleX(0.93);">Today</div>
<div style="position:absolute;left:1002px;top:62px;width:1px;height:22px;background:#dedede"></div>
<svg style="position:absolute;left:1009px;top:57px;" width="32" height="32" viewBox="0 0 32 32" fill="none" stroke="#444" stroke-width="1.5"><rect x="1" y="1" width="30" height="30" rx="2.5" stroke="#454545" stroke-width="1.8" fill="none"/><path d="M1 11 H31" stroke="#454545" stroke-width="1.6"/><circle cx="10" cy="5.8" r="1.9" stroke="#454545" stroke-width="1.3"/><circle cx="22" cy="5.8" r="1.9" stroke="#454545" stroke-width="1.3"/><path d="M1 17.7 H31 M1 24.3 H31 M6.8 11 V31 M12.8 11 V31 M18.8 11 V31 M24.8 11 V31" stroke="#454545" stroke-width="1.4"/></svg>
<div style="position:absolute;left:1048px;top:66px;font-size:12.5px;line-height:14px;height:14px;color:#444;white-space:nowrap;transform-origin:0 0;transform:scaleX(0.93);">Day</div>
<svg style="position:absolute;left:1076px;top:57px;" width="32" height="32" viewBox="0 0 32 32" fill="none" stroke="#444" stroke-width="1.5"><rect x="1" y="1" width="30" height="30" rx="2.5" stroke="#454545" stroke-width="1.8" fill="none"/><path d="M1 11 H31" stroke="#454545" stroke-width="1.6"/><circle cx="10" cy="5.8" r="1.9" stroke="#454545" stroke-width="1.3"/><circle cx="22" cy="5.8" r="1.9" stroke="#454545" stroke-width="1.3"/><path d="M1 17.7 H31 M1 24.3 H31 M6.8 11 V31 M12.8 11 V31 M18.8 11 V31 M24.8 11 V31" stroke="#454545" stroke-width="1.4"/></svg>
<div style="position:absolute;left:1115px;top:66px;font-size:12.5px;line-height:14px;height:14px;color:#444;white-space:nowrap;transform-origin:0 0;transform:scaleX(0.93);">Week</div>
<div style="position:absolute;left:1150px;top:54px;width:83px;height:38px;background:#c5d7f0"></div>
<svg style="position:absolute;left:1153px;top:57px;" width="32" height="32" viewBox="0 0 32 32" fill="none" stroke="#444" stroke-width="1.5"><rect x="1" y="1" width="30" height="30" rx="2.5" stroke="#454545" stroke-width="1.8" fill="none"/><path d="M1 11 H31" stroke="#454545" stroke-width="1.6"/><circle cx="10" cy="5.8" r="1.9" stroke="#454545" stroke-width="1.3"/><circle cx="22" cy="5.8" r="1.9" stroke="#454545" stroke-width="1.3"/><path d="M1 17.7 H31 M1 24.3 H31 M6.8 11 V31 M12.8 11 V31 M18.8 11 V31 M24.8 11 V31" stroke="#454545" stroke-width="1.4"/></svg>
<div style="position:absolute;left:1192px;top:66px;font-size:12.5px;line-height:14px;height:14px;color:#444;white-space:nowrap;transform-origin:0 0;transform:scaleX(0.93);">Month</div>
<svg style="position:absolute;left:1237px;top:76px;" width="14" height="12" viewBox="0 0 14 12" fill="none" stroke="#444" stroke-width="1.5"><path d="M0 1 H13.5" stroke="#454545" stroke-width="1.4"/><path d="M0 4 H13.5 L6.75 10.8 Z" fill="#454545" stroke="none"/></svg>
<svg style="position:absolute;left:19px;top:97px;" width="32" height="32" viewBox="0 0 32 32" fill="none" stroke="#444" stroke-width="1.5"><path d="M0.5 0.5 H31.5 V6.5 L28.5 10.5 L25.5 6.5 H6.5 L3.5 10.5 L0.5 6.5 Z" fill="#454545" stroke="none"/><path d="M2.2 2.2 H5 V6.2 L3.5 8.2 L2.2 6.2 Z M27 2.2 H29.8 V6.2 L28.5 8.2 L27 6.2 Z" fill="#fff" stroke="none"/><rect x="7.5" y="2.3" width="17.5" height="2.2" fill="#fff" stroke="none"/><path d="M17.2 14 V24 Q17.2 31.3 23.5 31.3 Q28.3 31.3 30.8 26" stroke="#454545" stroke-width="2.5"/><path d="M10.8 20.5 L17.2 14 L23.6 20.5" stroke="#454545" stroke-width="2.5"/></svg>
<svg style="position:absolute;left:57px;top:97px;" width="32" height="32" viewBox="0 0 32 32" fill="none" stroke="#444" stroke-width="1.5"><circle cx="15.5" cy="15.5" r="14.7" stroke="#454545" stroke-width="1.4"/><path d="M7.3 8.7 L15.6 15.2 L7.3 21.8 Z M15.6 8.7 L24.5 15.2 L15.6 21.8 Z" stroke="#454545" stroke-width="1.4" stroke-linejoin="round"/></svg>
<svg style="position:absolute;left:94px;top:109px;" width="14" height="8" viewBox="0 0 14 8" fill="none" stroke="#444" stroke-width="1.5"><path d="M0 0 H13.5 L6.75 7 Z" fill="#454545" stroke="none"/></svg>
<svg style="position:absolute;left:115px;top:97px;" width="30" height="32" viewBox="0 0 30 32" fill="none" stroke="#444" stroke-width="1.5"><path d="M2.5 5.5 L5.5 3 V14.5" stroke="#454545" stroke-width="1.5" fill="none"/><path d="M1.5 19.5 Q1.5 16.5 4.5 16.5 Q7.5 16.5 7.5 19.5 Q7.5 22.5 1.5 30 H8" stroke="#454545" stroke-width="1.5"/><path d="M19.5 2 V30 M12.5 23 L19.5 30 L26.5 23" stroke="#454545" stroke-width="1.5"/></svg>
<svg style="position:absolute;left:149px;top:109px;" width="14" height="8" viewBox="0 0 14 8" fill="none" stroke="#444" stroke-width="1.5"><path d="M0 0 H13.5 L6.75 7 Z" fill="#454545" stroke="none"/></svg>
<svg style="position:absolute;left:167px;top:97px;" width="32" height="32" viewBox="0 0 32 32" fill="none" stroke="#444" stroke-width="1.5"><path d="M0.5 0.5 H31.5 V6.5 L28.5 10.5 L25.5 6.5 H6.5 L3.5 10.5 L0.5 6.5 Z" fill="#454545" stroke="none"/><path d="M2.2 2.2 H5 V6.2 L3.5 8.2 L2.2 6.2 Z M27 2.2 H29.8 V6.2 L28.5 8.2 L27 6.2 Z" fill="#fff" stroke="none"/><rect x="7.5" y="2.3" width="17.5" height="2.2" fill="#fff" stroke="none"/><path d="M9.7 15 H1.5 V21 H9.7" stroke="#454545" stroke-width="2.2"/><path d="M19.5 11 Q14.5 12.5 14.5 18 Q14.5 24.5 21.5 24.5 H30.5" stroke="#454545" stroke-width="2.5"/><path d="M24 18 L30.8 24.5 L24 31" stroke="#454545" stroke-width="2.5"/></svg>
<div style="position:absolute;left:204px;top:101px;width:1px;height:21px;background:#dedede"></div>
<div style="position:absolute;left:208px;top:94px;width:38px;height:38px;background:#c5d7f0"></div>
<svg style="position:absolute;left:211px;top:97px;" width="32" height="32" viewBox="0 0 32 32" fill="none" stroke="#444" stroke-width="1.5"><path d="M19.4 1.3 A13.5 13.5 0 1 0 14.6 27.5" stroke="#454545" stroke-width="1.4"/><path d="M15.4 5.4 V15.4 H8.2" stroke="#454545" stroke-width="1.4"/><path d="M28.8 14.3 Q28 6.5 22.5 2.6 M22.5 2.6 H27.5 M22.5 2.6 V7.7" stroke="#454545" stroke-width="1.4"/><rect x="17.7" y="21.4" width="13.9" height="9.9" rx="0.5" stroke="#454545" stroke-width="1.5"/><path d="M20.9 21.4 V19 Q20.9 15.3 25.2 15.3 Q29.6 15.3 29.6 19 V21.4" stroke="#454545" stroke-width="1.5"/><circle cx="24.6" cy="25.5" r="1" fill="#454545" stroke="none"/><path d="M24.6 25.5 V28" stroke="#454545" stroke-width="0.9"/></svg>
<svg style="position:absolute;left:249px;top:97px;" width="32" height="32" viewBox="0 0 32 32" fill="none" stroke="#444" stroke-width="1.5"><rect x="1" y="1" width="21.5" height="9" stroke="#454545" stroke-width="1.8"/><path d="M3 4 H20 M3 7 H20" stroke="#777" stroke-width="1" stroke-dasharray="1 1"/><path d="M22.0 21.0 L28.0 21.0 M21.6 22.9 L27.0 25.4 M20.4 24.4 L24.2 29.0 M18.7 25.3 L20.2 31.1 M16.7 25.4 L15.7 31.3 M14.9 24.7 L11.5 29.6 M13.6 23.2 L8.4 26.2 M13.0 21.4 L7.0 21.9 M13.3 19.5 L7.6 17.4 M14.3 17.8 L10.1 13.6 M16.0 16.8 L13.9 11.1 M17.9 16.5 L18.4 10.5" stroke="#454545" stroke-width="1.3"/><rect x="21" y="10.5" width="10.7" height="7.7" rx="0.5" fill="#fff" stroke="#454545" stroke-width="1.5"/><path d="M23.2 10.5 V8.5 Q23.2 5.5 26.35 5.5 Q29.5 5.5 29.5 8.5 V10.5" stroke="#454545" stroke-width="1.5"/><circle cx="26.35" cy="14.3" r="0.8" fill="#454545" stroke="none"/></svg>
<svg style="position:absolute;left:290px;top:97px;" width="32" height="32" viewBox="0 0 32 32" fill="none" stroke="#444" stroke-width="1.5"><rect x="1" y="6.5" width="21.5" height="9.8" stroke="#454545" stroke-width="1.8"/><path d="M3 9.5 H20 M3 12.5 H20" stroke="#777" stroke-width="1" stroke-dasharray="1 1"/><path d="M8.5 22 V19.5 Q8.5 14 13.8 14 Q19.3 14 19.3 19.5" stroke="#454545" stroke-width="1.6" fill="#fff"/><rect x="14.9" y="19.8" width="13.8" height="10.2" fill="#fff" stroke="#454545" stroke-width="1.6"/><path d="M14 31 L29 19" stroke="#454545" stroke-width="1.4"/></svg>
<div style="position:absolute;left:324px;top:101px;width:1px;height:21px;background:#dedede"></div>
<svg style="position:absolute;left:331px;top:97px;" width="32" height="32" viewBox="0 0 32 32" fill="none" stroke="#444" stroke-width="1.5"><ellipse cx="7.8" cy="25" rx="4.6" ry="7.3" transform="rotate(28 7.8 25)" stroke="#454545" stroke-width="1.5"/><path d="M13.2 9.6 A4.4 7.6 0 1 0 15.3 14.5" stroke="#454545" stroke-width="1.5" transform="rotate(8 11 17)"/><path d="M21.6 9 A4.5 6.6 0 1 1 24 13.6" stroke="#454545" stroke-width="1.5" transform="rotate(12 26 7)"/></svg>
<svg style="position:absolute;left:369px;top:97px;" width="32" height="32" viewBox="0 0 32 32" fill="none" stroke="#444" stroke-width="1.5"><path d="M0.5 1.7 H14.2 V17 M0.5 28.4 H14" stroke="#454545" stroke-width="1.5"/><path d="M0.5 4.8 H10.5 M0.5 7.2 H10.5" stroke="#454545" stroke-width="1.3"/><path d="M10 4 H14 V8 L12 10 L10 8 Z" stroke="#454545" stroke-width="1"/><path d="M0.5 12.5 H5 Q8 12.5 8 15.5 M0.5 19 H5 Q8 19 8 22 H0.5" stroke="#454545" stroke-width="1.4"/><path d="M24 1 L30 4.5 V10.5 L24 14 L18 10.5 V4.5 Z M18 4.5 L24 8 L30 4.5 M24 8 V14" stroke="#454545" stroke-width="1.2" stroke-linejoin="round"/><circle cx="23.5" cy="23.2" r="8.2" fill="#fff" stroke="#454545" stroke-width="1.5"/><path d="M23.5 18 V25 M23.5 27 V28.8" stroke="#454545" stroke-width="1.5"/></svg>
<div style="position:absolute;left:406px;top:101px;width:1px;height:21px;background:#dedede"></div>
<svg style="position:absolute;left:413px;top:97px;" width="32" height="32" viewBox="0 0 32 32" fill="none" stroke="#444" stroke-width="1.5"><path d="M0.7 19.8 V0.5 H14.5 L20 8 V19.8" stroke="#666" stroke-width="1.2"/><path d="M3 5 H14 M3 9 H12 M3 13 H9" stroke="#888" stroke-width="1.2"/><path d="M1 1 Q4 8 10 8 Q15 7 16 9 L20 9" stroke="#454545" stroke-width="1.1"/><path d="M11.5 31.5 V11.5 H26 L31.5 18 V31.5 Z" fill="#fff" stroke="#666" stroke-width="1.2"/><path d="M17 17 H26 M17 21 H29 M17 25 H29 M14 29 H29" stroke="#888" stroke-width="1.2"/><rect x="4.6" y="15" width="8" height="15" rx="4" transform="rotate(45 8.6 22.5)" stroke="#454545" stroke-width="1.6" fill="none"/><rect x="13.4" y="6" width="8" height="15" rx="4" transform="rotate(45 17.4 13.5)" stroke="#454545" stroke-width="1.6" fill="none"/></svg>
<svg style="position:absolute;left:451px;top:97px;" width="32" height="32" viewBox="0 0 32 32" fill="none" stroke="#444" stroke-width="1.5"><path d="M16 16 Q12 9.5 7.5 9.5 Q2 9.5 2 16 Q2 22.5 7.5 22.5 Q12 22.5 16 16 Q20 9.5 24.5 9.5 Q30 9.5 30 16 Q30 22.5 24.5 22.5 Q20 22.5 16 16 Z" stroke="#454545" stroke-width="3.4"/></svg>
<div style="position:absolute;left:488px;top:101px;width:1px;height:21px;background:#dedede"></div>
<svg style="position:absolute;left:495px;top:97px;" width="32" height="32" viewBox="0 0 32 32" fill="none" stroke="#444" stroke-width="1.5"><circle cx="16" cy="16" r="15.3" stroke="#454545" stroke-width="1.4"/><path d="M7.3 18 L12.5 23.2 L24 9.4" stroke="#454545" stroke-width="1.5"/></svg>
<svg style="position:absolute;left:533px;top:97px;" width="32" height="32" viewBox="0 0 32 32" fill="none" stroke="#444" stroke-width="1.5"><rect x="0.8" y="0.8" width="24.4" height="21.6" stroke="#454545" stroke-width="1.6"/><rect x="1" y="1" width="24" height="2.3" fill="#888" stroke="none"/><path d="M12.3 1 V22.4 M1 12.3 H25" stroke="#454545" stroke-width="1.4"/><path d="M15 7 L17 9.5 L21.5 4.5 M4 17 L6 19.5 L10.5 14.5" stroke="#454545" stroke-width="1.3"/><circle cx="23.5" cy="23.2" r="8" fill="#fff" stroke="#454545" stroke-width="1.5"/><path d="M19.5 23.5 L22.5 26.5 L27.5 20.5" stroke="#454545" stroke-width="1.4"/></svg>
<svg style="position:absolute;left:571px;top:97px;" width="32" height="32" viewBox="0 0 32 32" fill="none" stroke="#444" stroke-width="1.5"><path d="M5 29.5 A15.5 15.5 0 1 1 27 29.5 Z" stroke="#454545" stroke-width="1.4"/><path d="M16 2 V5.5 M1.5 17 H5.5 M26.5 17 H30.5 M5.5 6.5 L8.3 9.3 M26.5 6.5 L23.7 9.3" stroke="#454545" stroke-width="1.3"/><path d="M21 7.5 L17.2 14" stroke="#454545" stroke-width="1.5"/><circle cx="15.7" cy="16.2" r="2.5" stroke="#454545" stroke-width="1.6"/><rect x="9" y="22.7" width="13.7" height="5.1" fill="#454545" stroke="none"/><path d="M11 25.2 H13 M14.8 25.2 H16.8 M18.6 25.2 H20.6" stroke="#fff" stroke-width="1.2"/></svg>
<svg style="position:absolute;left:610px;top:97px;" width="32" height="32" viewBox="0 0 32 32" fill="none" stroke="#444" stroke-width="1.5"><path d="M0.9 30.5 V1.2 H19 Q24 9 30 13.5" stroke="#454545" stroke-width="1.6"/><path d="M0.9 30.5 H15" stroke="#454545" stroke-width="1.6"/><path d="M2 2 Q6 11 12 11 Q18 9 19 13 L30 13.5" stroke="#454545" stroke-width="1.2"/><path d="M6 5 H22 M11 8.5 H24" stroke="#777" stroke-width="1.2"/><path d="M3.5 17 H13 M3.5 21 H12 M3.5 25 H11" stroke="#777" stroke-width="1.3"/><circle cx="22.5" cy="23.2" r="8" fill="#fff" stroke="#454545" stroke-width="1.5"/><path d="M19.7 20.5 Q19.7 17.3 22.5 17.3 Q25.5 17.3 25.5 20 Q25.5 22 22.8 23.2 V25 M22.8 27.2 V28.2" stroke="#454545" stroke-width="1.3"/></svg>
<svg style="position:absolute;left:648px;top:97px;" width="32" height="32" viewBox="0 0 32 32" fill="none" stroke="#444" stroke-width="1.5"><path d="M0.5 29.5 V15 L17.8 25 V29.5 Z" fill="#454545" stroke="none"/><path d="M2.5 15.5 L5 7 L17.8 14" stroke="#454545" stroke-width="1.4"/><path d="M7 4.5 L14 0.8 L17.8 7" stroke="#454545" stroke-width="1.4"/><path d="M3 19 L7 9 M6 20.5 L10 10.5 M9 22 L13 12 M12 23.5 L16 14 M8 6 L10 10 M11 4 L14 9 M13 2.5 L16 8" stroke="#454545" stroke-width="1.1"/><rect x="17.8" y="2" width="9.2" height="26.3" fill="#fff" stroke="#454545" stroke-width="1.5"/><circle cx="22.4" cy="23" r="1.5" stroke="#454545" stroke-width="1.2"/></svg>
<svg style="position:absolute;left:687px;top:116px;" width="14" height="12" viewBox="0 0 14 12" fill="none" stroke="#444" stroke-width="1.5"><path d="M0 1 H13.5" stroke="#454545" stroke-width="1.4"/><path d="M0 4 H13.5 L6.75 10.8 Z" fill="#454545" stroke="none"/></svg>
<svg style="position:absolute;left:19px;top:137px;" width="33" height="33" viewBox="0 0 33 33" fill="none" stroke="#444" stroke-width="1.5"><path d="M0.9 27.5 V0.9 H29 V11.6" stroke="#4a4a4a" stroke-width="1.6"/><path d="M0.9 8.3 H29 M9.9 8.3 V27.5 M0.9 27.5 H16" stroke="#4a4a4a" stroke-width="1.6"/><path d="M16.4 16.2 H28 L32 20 V31.7 H16.4 Z" fill="#fff" stroke="#454545" stroke-width="1.5"/><rect x="19.5" y="16.2" width="7" height="5" stroke="#454545" stroke-width="1.2"/><path d="M24 17.5 V20" stroke="#454545" stroke-width="1"/><path d="M19 31.7 V25 H29 V31.7 M21 27.8 H27 M21 30 H27" stroke="#454545" stroke-width="1.1"/></svg>
<svg style="position:absolute;left:57px;top:137px;" width="33" height="33" viewBox="0 0 33 33" fill="none" stroke="#444" stroke-width="1.5"><path d="M0.9 27.5 V0.9 H28.8 V14" stroke="#4a4a4a" stroke-width="1.6"/><path d="M0.9 8.3 H28.8 M10.2 8.3 V27.5 M0.9 27.5 H15" stroke="#4a4a4a" stroke-width="1.6"/><circle cx="23.3" cy="23.4" r="8.3" fill="#fff" stroke="#454545" stroke-width="1.5"/><path d="M19.5 28 Q19 20.5 26 20.5 M23.3 17.5 L26.5 20.5 L23.3 23.5" stroke="#454545" stroke-width="1.3"/></svg>
<svg style="position:absolute;left:97px;top:156px;" width="14" height="12" viewBox="0 0 14 12" fill="none" stroke="#444" stroke-width="1.5"><path d="M0 1 H13.5" stroke="#454545" stroke-width="1.4"/><path d="M0 4 H13.5 L6.75 10.8 Z" fill="#454545" stroke="none"/></svg>
<svg style="position:absolute;left:129px;top:137px;" width="33" height="33" viewBox="0 0 33 33" fill="none" stroke="#444" stroke-width="1.5"><ellipse cx="12.5" cy="3.5" rx="12" ry="2.8" stroke="#454545" stroke-width="1.5"/><path d="M0.7 3.8 L9.7 18.4 V27.5 L11.5 25.5" stroke="#454545" stroke-width="1.5"/><path d="M24.3 4 L17.5 14" stroke="#454545" stroke-width="1.5"/><path d="M13.8 31.5 L15.3 26 L28 13.8 L31.5 17.3 L18.8 29.8 Z M15.3 26 L18.8 29.8" fill="#fff" stroke="#454545" stroke-width="1.4" stroke-linejoin="round"/></svg>
<svg style="position:absolute;left:166px;top:149px;" width="14" height="8" viewBox="0 0 14 8" fill="none" stroke="#444" stroke-width="1.5"><path d="M0 0 H13.5 L6.75 7 Z" fill="#454545" stroke="none"/></svg>
<svg style="position:absolute;left:184px;top:137px;" width="33" height="33" viewBox="0 0 33 33" fill="none" stroke="#444" stroke-width="1.5"><ellipse cx="12.5" cy="3.5" rx="12" ry="2.8" stroke="#454545" stroke-width="1.5"/><path d="M0.7 3.8 L9.7 18.4 V27.5 L11.5 25.5" stroke="#454545" stroke-width="1.5"/><path d="M24.3 4 L17.5 14" stroke="#454545" stroke-width="1.5"/><path d="M13.8 31.5 L15.3 26 L28 13.8 L31.5 17.3 L18.8 29.8 Z M15.3 26 L18.8 29.8" fill="#fff" stroke="#454545" stroke-width="1.4" stroke-linejoin="round"/></svg>
<div style="position:absolute;left:219px;top:142px;width:183px;height:22px;background:#fff;border:1px solid #a8a8a8"></div>
<div style="position:absolute;left:388px;top:143px;width:1px;height:20px;background:#c8c8c8"></div>
<svg style="position:absolute;left:392px;top:151px;" width="8" height="5" viewBox="0 0 8 5" fill="none" stroke="#444" stroke-width="1.5"><path d="M0 0 H7 L3.5 3.5 Z" fill="#444" stroke="none"/></svg>
<div style="position:absolute;left:225px;top:146px;font-size:12.5px;line-height:14px;height:14px;color:#111;white-space:nowrap;transform-origin:0 0;transform:scaleX(0.945);">No filter selected</div>
<svg style="position:absolute;left:405px;top:137px;" width="33" height="33" viewBox="0 0 33 33" fill="none" stroke="#444" stroke-width="1.5"><ellipse cx="12.5" cy="3.5" rx="12" ry="2.8" stroke="#454545" stroke-width="1.5"/><path d="M0.7 3.8 L9.7 18.4 V27.5 L11.5 25.5" stroke="#454545" stroke-width="1.5"/><path d="M24.3 4 L18.5 13" stroke="#454545" stroke-width="1.5"/><circle cx="23.5" cy="23" r="3" stroke="#454545" stroke-width="1.3"/><circle cx="23.5" cy="23" r="6.3" stroke="#454545" stroke-width="2.8" stroke-dasharray="2.3 1.6"/></svg>
<svg style="position:absolute;left:445px;top:156px;" width="14" height="12" viewBox="0 0 14 12" fill="none" stroke="#444" stroke-width="1.5"><path d="M0 1 H13.5" stroke="#454545" stroke-width="1.4"/><path d="M0 4 H13.5 L6.75 10.8 Z" fill="#454545" stroke="none"/></svg>
<div style="position:absolute;left:4px;top:173px;width:227px;height:592px;background:#fff"></div>
<div style="position:absolute;left:4px;top:173px;width:227px;height:21px;background:linear-gradient(#bccfe9,#e9eff8)"></div>
<div style="position:absolute;left:6px;top:177px;font-size:12px;line-height:14px;height:14px;color:#3a4f6e;white-space:nowrap;transform-origin:0 0;transform:scaleX(0.9);">Unscheduled Operations - 1...</div>
<svg style="position:absolute;left:168px;top:180px;" width="12" height="8" viewBox="0 0 12 8" fill="none" stroke="#444" stroke-width="1.5"><path d="M1 2.5 H11 L6 7.5 Z" fill="#3c3c3c" stroke="none"/></svg>
<svg style="position:absolute;left:191px;top:177px;" width="10" height="12" viewBox="0 0 10 12" fill="none" stroke="#444" stroke-width="1.5"><path d="M2 1.5 H8 M3 1.5 V7 H7 V1.5 M1 7.5 H9 M5 7.5 V11.5" stroke="#3c3c3c" stroke-width="1.4"/></svg>
<svg style="position:absolute;left:212px;top:178px;" width="12" height="12" viewBox="0 0 12 12" fill="none" stroke="#444" stroke-width="1.5"><path d="M2 2 L10 10 M10 2 L2 10" stroke="#3c3c3c" stroke-width="2.2"/></svg>
<div style="position:absolute;left:4px;top:194px;width:227px;height:12px;background:#eeeeee"></div>
<div style="position:absolute;left:35px;top:211px;font-size:12px;line-height:14px;height:14px;color:#222;white-space:nowrap;transform-origin:0 0;transform:scaleX(0.9);">Order No.</div>
<div style="position:absolute;left:101px;top:211px;font-size:12px;line-height:14px;height:14px;color:#222;white-space:nowrap;transform-origin:0 0;transform:scaleX(0.9);">Op. No.</div>
<div style="position:absolute;left:28px;top:228px;width:203px;height:2px;background:#e4e4e4"></div>
<div style="position:absolute;left:93px;top:229px;width:1px;height:41px;background:#e4e4e4"></div>
<div style="position:absolute;left:159px;top:229px;width:1px;height:41px;background:#e4e4e4"></div>
<div style="position:absolute;left:33px;top:232px;font-size:12px;line-height:14px;height:14px;color:#222;white-space:nowrap;transform-origin:0 0;transform:scaleX(0.9);"><span style="text-decoration:underline">A</span>a</div>
<svg style="position:absolute;left:59px;top:235px;" width="10" height="8" viewBox="0 0 10 8" fill="none" stroke="#444" stroke-width="1.5"><path d="M1 2 L5 6 L9 2" stroke="#222" stroke-width="2"/></svg>
<svg style="position:absolute;left:99px;top:235px;" width="12" height="8" viewBox="0 0 12 8" fill="none" stroke="#444" stroke-width="1.5"><path d="M1 2 H11 M1 6 H11" stroke="#222" stroke-width="2.2"/></svg>
<svg style="position:absolute;left:124px;top:235px;" width="10" height="8" viewBox="0 0 10 8" fill="none" stroke="#444" stroke-width="1.5"><path d="M1 2 L5 6 L9 2" stroke="#222" stroke-width="2"/></svg>
<div style="position:absolute;left:28px;top:248px;width:203px;height:2px;background:#e4e4e4"></div>
<div style="position:absolute;left:6px;top:253px;width:20px;height:12px;background:#7eb3ac;box-shadow:1px 1px 1px #999"></div>
<div style="position:absolute;left:33px;top:253px;font-size:12px;line-height:14px;height:14px;color:#222;white-space:nowrap;transform-origin:0 0;transform:scaleX(0.9);">X01</div>
<div style="position:absolute;right:1234px;top:253px;font-size:12px;line-height:14px;color:#222;white-space:nowrap;text-align:right;transform-origin:100% 0;transform:scaleX(0.9);">10</div>
<div style="position:absolute;left:231px;top:173px;width:4px;height:592px;background:#f0f0f0"></div>
<div style="position:absolute;left:235px;top:173px;width:1px;height:592px;background:#9b9b9b"></div>
<div style="position:absolute;left:236px;top:173px;width:227px;height:592px;background:#fff"></div>
<div style="position:absolute;left:236px;top:173px;width:227px;height:22px;background:linear-gradient(#bccfe9,#e9eff8)"></div>
<div style="position:absolute;left:238px;top:177px;font-size:12px;line-height:14px;height:14px;color:#3a4f6e;white-space:nowrap;transform-origin:0 0;transform:scaleX(0.885);">Primary Resource Calendars</div>
<svg style="position:absolute;left:400px;top:181px;" width="12" height="8" viewBox="0 0 12 8" fill="none" stroke="#444" stroke-width="1.5"><path d="M1 2.5 H11 L6 7.5 Z" fill="#3c3c3c" stroke="none"/></svg>
<svg style="position:absolute;left:423px;top:177px;" width="10" height="12" viewBox="0 0 10 12" fill="none" stroke="#444" stroke-width="1.5"><path d="M2 1.5 H8 M3 1.5 V7 H7 V1.5 M1 7.5 H9 M5 7.5 V11.5" stroke="#3c3c3c" stroke-width="1.4"/></svg>
<svg style="position:absolute;left:444px;top:178px;" width="12" height="12" viewBox="0 0 12 12" fill="none" stroke="#444" stroke-width="1.5"><path d="M2 2 L10 10 M10 2 L2 10" stroke="#3c3c3c" stroke-width="2.2"/></svg>
<div style="position:absolute;left:236px;top:196px;width:227px;height:543px;background:#fff;border:1px solid #828790;border-right-color:#a0a0a0"></div>
<div style="position:absolute;left:238px;top:211px;width:223px;height:13px;background:#0078d7"></div>
<div style="position:absolute;left:240px;top:199px;font-size:11.4px;line-height:13px;height:13px;color:#000;white-space:nowrap;transform-origin:0 0;transform:scaleX(1.0);">Component Assembly</div>
<div style="position:absolute;left:240px;top:212px;font-size:11.4px;line-height:13px;height:13px;color:#fff;white-space:nowrap;transform-origin:0 0;transform:scaleX(1.0);">Final Assembly</div>
<div style="position:absolute;left:240px;top:225px;font-size:11.4px;line-height:13px;height:13px;color:#000;white-space:nowrap;transform-origin:0 0;transform:scaleX(1.0);">Metal Worker 1</div>
<div style="position:absolute;left:240px;top:238px;font-size:11.4px;line-height:13px;height:13px;color:#000;white-space:nowrap;transform-origin:0 0;transform:scaleX(1.0);">Metal Worker 2</div>
<div style="position:absolute;left:240px;top:251px;font-size:11.4px;line-height:13px;height:13px;color:#000;white-space:nowrap;transform-origin:0 0;transform:scaleX(1.0);">Painting</div>
<div style="position:absolute;left:240px;top:264px;font-size:11.4px;line-height:13px;height:13px;color:#000;white-space:nowrap;transform-origin:0 0;transform:scaleX(1.0);">Welder 1</div>
<div style="position:absolute;left:240px;top:277px;font-size:11.4px;line-height:13px;height:13px;color:#000;white-space:nowrap;transform-origin:0 0;transform:scaleX(1.0);">Welder 2</div>
<div style="position:absolute;left:236px;top:739px;width:227px;height:26px;background:#fff"></div>
<div style="position:absolute;left:243px;top:747px;font-size:12px;line-height:14px;height:14px;color:#111;white-space:nowrap;transform-origin:0 0;transform:scaleX(0.9);">Primary Calendars</div>
<div style="position:absolute;left:339px;top:742px;width:124px;height:22px;background:#ebebeb;border:1px solid #dadada"></div>
<div style="position:absolute;left:342px;top:745px;font-size:12px;line-height:14px;height:14px;color:#6d6d6d;white-space:nowrap;transform-origin:0 0;transform:scaleX(0.9);">Secondary Calendars</div>
<div style="position:absolute;left:463px;top:173px;width:4px;height:592px;background:#f0f0f0"></div>
<div style="position:absolute;left:467px;top:173px;width:897px;height:593px;background:#f0f0f0;border:2px solid #a0a0a0;border-top:1px solid #b0b0b0"></div>
<div style="position:absolute;left:470px;top:175px;width:169px;height:25px;background:linear-gradient(#f7f6f1,#eeece4);border:1px solid #e4e1d6;border-bottom:none;border-radius:3px 3px 0 0"></div>
<svg style="position:absolute;left:475px;top:179px;" width="19" height="19" viewBox="0 0 19 19" fill="none" stroke="#444" stroke-width="1.5"><path d="M1.5 17.5 V1.5 H16.5 V8" stroke="#333" stroke-width="1.3"/><path d="M3 3.2 H5 M7 3.2 H9 M11 3.2 H13 M15 3.2 H16" stroke="#333" stroke-width="1.2"/><path d="M1.5 5.5 H16.5 M1.5 9.5 H14 M1.5 13.5 H9 M1.5 17.5 H8 M6.5 5.5 V17.5 M11.5 5.5 V12" stroke="#333" stroke-width="1.1"/><path d="M7.5 18.5 L8.5 15 L16 7.5 L18.5 10 L11 17.5 Z" fill="#fff" stroke="#333" stroke-width="1.1" stroke-linejoin="round"/></svg>
<div style="position:absolute;left:494px;top:181px;font-size:12px;line-height:14px;height:14px;color:#222;white-space:nowrap;transform-origin:0 0;transform:scaleX(0.945);">Editor : New Record</div>
<svg style="position:absolute;left:616px;top:182px;" width="12" height="12" viewBox="0 0 12 12" fill="none" stroke="#444" stroke-width="1.5"><path d="M2 2 L10 10 M10 2 L2 10" stroke="#111" stroke-width="2"/></svg>
<div style="position:absolute;left:640px;top:176px;width:138px;height:24px;background:#fff;border:1px solid #a9bdd8;border-bottom:none;border-radius:4px 4px 0 0"></div>
<svg style="position:absolute;left:645px;top:180px;" width="17" height="17" viewBox="0 0 17 17" fill="none" stroke="#444" stroke-width="1.5"><rect x="0.6" y="0.6" width="15.3" height="15.3" stroke="#444" stroke-width="1.1"/><path d="M0.6 4.8 H15.9 M0.6 8.3 H15.9 M0.6 11.8 H15.9 M4.4 4.8 V15.9 M8.2 4.8 V15.9 M12 4.8 V15.9" stroke="#444" stroke-width="0.9"/><circle cx="5" cy="2.9" r="1.1" stroke="#444" stroke-width="0.8"/><circle cx="11.3" cy="2.9" r="1.1" stroke="#444" stroke-width="0.8"/></svg>
<div style="position:absolute;left:663px;top:181px;font-size:12px;line-height:14px;height:14px;color:#111;white-space:nowrap;transform-origin:0 0;transform:scaleX(0.945);"><b>Final Assembly</b></div>
<svg style="position:absolute;left:756px;top:182px;" width="12" height="12" viewBox="0 0 12 12" fill="none" stroke="#444" stroke-width="1.5"><path d="M2 2.5 L10 10 M10 2.5 L2 10" stroke="#111" stroke-width="2"/></svg>
<svg style="position:absolute;left:1348px;top:184px;" width="10" height="6" viewBox="0 0 10 6" fill="none" stroke="#444" stroke-width="1.5"><path d="M0 0 H10 L5 5 Z" fill="#111" stroke="none"/></svg>
<div style="position:absolute;left:469px;top:199px;width:894px;height:25px;background:#005e8a;border-top:1px solid #12308c;border-bottom:1px solid #12308c"></div>
<div style="position:absolute;left:477px;top:203px;font-size:16.4px;line-height:19px;height:19px;color:#fff;white-space:nowrap;transform-origin:0 0;transform:scaleX(1.0);"><b>Primary Resource Calendar</b></div>
<div style="position:absolute;left:469px;top:224px;width:893px;height:540px;background:#fff"></div>
<div style="position:absolute;left:469px;top:224px;width:876px;height:23px;background:#e3e3e3"></div>
<div style="position:absolute;left:432px;width:200px;top:229px;font-size:12px;line-height:14px;color:#222;white-space:nowrap;text-align:center;transform-origin:50% 0;transform:scaleX(0.96);">hétfő</div>
<div style="position:absolute;left:557px;width:200px;top:229px;font-size:12px;line-height:14px;color:#222;white-space:nowrap;text-align:center;transform-origin:50% 0;transform:scaleX(0.96);">kedd</div>
<div style="position:absolute;left:682px;width:200px;top:229px;font-size:12px;line-height:14px;color:#222;white-space:nowrap;text-align:center;transform-origin:50% 0;transform:scaleX(0.96);">szerda</div>
<div style="position:absolute;left:807px;width:200px;top:229px;font-size:12px;line-height:14px;color:#222;white-space:nowrap;text-align:center;transform-origin:50% 0;transform:scaleX(0.96);">csütörtök</div>
<div style="position:absolute;left:932px;width:200px;top:229px;font-size:12px;line-height:14px;color:#222;white-space:nowrap;text-align:center;transform-origin:50% 0;transform:scaleX(0.96);">péntek</div>
<div style="position:absolute;left:1057px;width:200px;top:229px;font-size:12px;line-height:14px;color:#222;white-space:nowrap;text-align:center;transform-origin:50% 0;transform:scaleX(0.96);">szombat</div>
<div style="position:absolute;left:1182px;width:200px;top:229px;font-size:12px;line-height:14px;color:#222;white-space:nowrap;text-align:center;transform-origin:50% 0;transform:scaleX(0.96);">vasárnap</div>
<div style="position:absolute;left:470px;top:247px;width:875px;height:103px;background:#fff"></div>
<div style="position:absolute;left:971px;top:247px;width:124px;height:24px;background:#0070c6"></div>
<div style="position:absolute;left:971px;top:296px;width:124px;height:54px;background:#0070c6"></div>
<div style="position:absolute;left:595px;top:247px;width:1px;height:103px;background:#d4d4d4"></div>
<div style="position:absolute;left:720px;top:247px;width:1px;height:103px;background:#d4d4d4"></div>
<div style="position:absolute;left:845px;top:247px;width:1px;height:103px;background:#d4d4d4"></div>
<div style="position:absolute;left:970px;top:247px;width:1px;height:103px;background:#d4d4d4"></div>
<div style="position:absolute;left:1095px;top:247px;width:1px;height:103px;background:#d4d4d4"></div>
<div style="position:absolute;left:1220px;top:247px;width:1px;height:103px;background:#d4d4d4"></div>
<div style="position:absolute;left:470px;top:349px;width:875px;height:1px;background:#d4d4d4"></div>
<div style="position:absolute;right:797px;top:252px;font-size:11.2px;line-height:13px;color:#2a2a2a;white-space:nowrap;text-align:right;transform-origin:100% 0;transform:scaleX(0.965);">január 10</div>
<div style="position:absolute;right:672px;top:252px;font-size:11.2px;line-height:13px;color:#2a2a2a;white-space:nowrap;text-align:right;transform-origin:100% 0;transform:scaleX(0.965);">11</div>
<div style="position:absolute;right:547px;top:252px;font-size:11.2px;line-height:13px;color:#2a2a2a;white-space:nowrap;text-align:right;transform-origin:100% 0;transform:scaleX(0.965);">12</div>
<div style="position:absolute;right:422px;top:252px;font-size:11.2px;line-height:13px;color:#2a2a2a;white-space:nowrap;text-align:right;transform-origin:100% 0;transform:scaleX(0.965);">13</div>
<div style="position:absolute;right:297px;top:252px;font-size:11.2px;line-height:13px;color:#fff;white-space:nowrap;text-align:right;transform-origin:100% 0;transform:scaleX(0.965);">14</div>
<div style="position:absolute;right:172px;top:252px;font-size:11.2px;line-height:13px;color:#2a2a2a;white-space:nowrap;text-align:right;transform-origin:100% 0;transform:scaleX(0.965);">15</div>
<div style="position:absolute;right:47px;top:252px;font-size:11.2px;line-height:13px;color:#2a2a2a;white-space:nowrap;text-align:right;transform-origin:100% 0;transform:scaleX(0.965);">16</div>
<div style="position:absolute;left:472px;top:271px;width:871px;height:25px;background:linear-gradient(100deg,#d0d0d0 0%,#ececec 45%,#d8d8d8 75%,#c9c9c9 100%);border-top:1px solid #333;border-bottom:1px solid #333"></div>
<div style="position:absolute;left:868px;top:276px;font-size:12px;line-height:14px;height:14px;color:#333;white-space:nowrap;transform-origin:0 0;transform:scaleX(0.885);">Default: On Shift</div>
<div style="position:absolute;left:470px;top:350px;width:875px;height:103px;background:#fff"></div>
<div style="position:absolute;left:595px;top:350px;width:1px;height:103px;background:#d4d4d4"></div>
<div style="position:absolute;left:720px;top:350px;width:1px;height:103px;background:#d4d4d4"></div>
<div style="position:absolute;left:845px;top:350px;width:1px;height:103px;background:#d4d4d4"></div>
<div style="position:absolute;left:970px;top:350px;width:1px;height:103px;background:#d4d4d4"></div>
<div style="position:absolute;left:1095px;top:350px;width:1px;height:103px;background:#d4d4d4"></div>
<div style="position:absolute;left:1220px;top:350px;width:1px;height:103px;background:#d4d4d4"></div>
<div style="position:absolute;left:470px;top:452px;width:875px;height:1px;background:#d4d4d4"></div>
<div style="position:absolute;right:797px;top:355px;font-size:11.2px;line-height:13px;color:#2a2a2a;white-space:nowrap;text-align:right;transform-origin:100% 0;transform:scaleX(0.965);">17</div>
<div style="position:absolute;right:672px;top:355px;font-size:11.2px;line-height:13px;color:#2a2a2a;white-space:nowrap;text-align:right;transform-origin:100% 0;transform:scaleX(0.965);">18</div>
<div style="position:absolute;right:547px;top:355px;font-size:11.2px;line-height:13px;color:#2a2a2a;white-space:nowrap;text-align:right;transform-origin:100% 0;transform:scaleX(0.965);">19</div>
<div style="position:absolute;right:422px;top:355px;font-size:11.2px;line-height:13px;color:#2a2a2a;white-space:nowrap;text-align:right;transform-origin:100% 0;transform:scaleX(0.965);">20</div>
<div style="position:absolute;right:297px;top:355px;font-size:11.2px;line-height:13px;color:#2a2a2a;white-space:nowrap;text-align:right;transform-origin:100% 0;transform:scaleX(0.965);">21</div>
<div style="position:absolute;right:172px;top:355px;font-size:11.2px;line-height:13px;color:#2a2a2a;white-space:nowrap;text-align:right;transform-origin:100% 0;transform:scaleX(0.965);">22</div>
<div style="position:absolute;right:47px;top:355px;font-size:11.2px;line-height:13px;color:#2a2a2a;white-space:nowrap;text-align:right;transform-origin:100% 0;transform:scaleX(0.965);">23</div>
<div style="position:absolute;left:472px;top:375px;width:871px;height:25px;background:linear-gradient(100deg,#d0d0d0 0%,#ececec 45%,#d8d8d8 75%,#c9c9c9 100%);border-top:1px solid #333;border-bottom:1px solid #333"></div>
<div style="position:absolute;left:868px;top:380px;font-size:12px;line-height:14px;height:14px;color:#333;white-space:nowrap;transform-origin:0 0;transform:scaleX(0.885);">Default: On Shift</div>
<div style="position:absolute;left:470px;top:453px;width:875px;height:103px;background:#fff"></div>
<div style="position:absolute;left:595px;top:453px;width:1px;height:103px;background:#d4d4d4"></div>
<div style="position:absolute;left:720px;top:453px;width:1px;height:103px;background:#d4d4d4"></div>
<div style="position:absolute;left:845px;top:453px;width:1px;height:103px;background:#d4d4d4"></div>
<div style="position:absolute;left:970px;top:453px;width:1px;height:103px;background:#d4d4d4"></div>
<div style="position:absolute;left:1095px;top:453px;width:1px;height:103px;background:#d4d4d4"></div>
<div style="position:absolute;left:1220px;top:453px;width:1px;height:103px;background:#d4d4d4"></div>
<div style="position:absolute;left:470px;top:555px;width:875px;height:1px;background:#d4d4d4"></div>
<div style="position:absolute;right:797px;top:458px;font-size:11.2px;line-height:13px;color:#2a2a2a;white-space:nowrap;text-align:right;transform-origin:100% 0;transform:scaleX(0.965);">24</div>
<div style="position:absolute;right:672px;top:458px;font-size:11.2px;line-height:13px;color:#2a2a2a;white-space:nowrap;text-align:right;transform-origin:100% 0;transform:scaleX(0.965);">25</div>
<div style="position:absolute;right:547px;top:458px;font-size:11.2px;line-height:13px;color:#2a2a2a;white-space:nowrap;text-align:right;transform-origin:100% 0;transform:scaleX(0.965);">26</div>
<div style="position:absolute;right:422px;top:458px;font-size:11.2px;line-height:13px;color:#2a2a2a;white-space:nowrap;text-align:right;transform-origin:100% 0;transform:scaleX(0.965);">27</div>
<div style="position:absolute;right:297px;top:458px;font-size:11.2px;line-height:13px;color:#2a2a2a;white-space:nowrap;text-align:right;transform-origin:100% 0;transform:scaleX(0.965);">28</div>
<div style="position:absolute;right:172px;top:458px;font-size:11.2px;line-height:13px;color:#2a2a2a;white-space:nowrap;text-align:right;transform-origin:100% 0;transform:scaleX(0.965);">29</div>
<div style="position:absolute;right:47px;top:458px;font-size:11.2px;line-height:13px;color:#2a2a2a;white-space:nowrap;text-align:right;transform-origin:100% 0;transform:scaleX(0.965);">30</div>
<div style="position:absolute;left:472px;top:478px;width:871px;height:25px;background:linear-gradient(100deg,#d0d0d0 0%,#ececec 45%,#d8d8d8 75%,#c9c9c9 100%);border-top:1px solid #333;border-bottom:1px solid #333"></div>
<div style="position:absolute;left:868px;top:483px;font-size:12px;line-height:14px;height:14px;color:#333;white-space:nowrap;transform-origin:0 0;transform:scaleX(0.885);">Default: On Shift</div>
<div style="position:absolute;left:470px;top:556px;width:875px;height:103px;background:#e3e3e3"></div>
<div style="position:absolute;left:470px;top:556px;width:125px;height:103px;background:#fff"></div>
<div style="position:absolute;left:595px;top:556px;width:1px;height:103px;background:#d4d4d4"></div>
<div style="position:absolute;left:720px;top:556px;width:1px;height:103px;background:#d4d4d4"></div>
<div style="position:absolute;left:845px;top:556px;width:1px;height:103px;background:#d4d4d4"></div>
<div style="position:absolute;left:970px;top:556px;width:1px;height:103px;background:#d4d4d4"></div>
<div style="position:absolute;left:1095px;top:556px;width:1px;height:103px;background:#d4d4d4"></div>
<div style="position:absolute;left:1220px;top:556px;width:1px;height:103px;background:#d4d4d4"></div>
<div style="position:absolute;left:470px;top:658px;width:875px;height:1px;background:#d4d4d4"></div>
<div style="position:absolute;right:797px;top:561px;font-size:11.2px;line-height:13px;color:#2a2a2a;white-space:nowrap;text-align:right;transform-origin:100% 0;transform:scaleX(0.965);">31</div>
<div style="position:absolute;right:672px;top:561px;font-size:11.2px;line-height:13px;color:#2a2a2a;white-space:nowrap;text-align:right;transform-origin:100% 0;transform:scaleX(0.965);">február 1</div>
<div style="position:absolute;right:547px;top:561px;font-size:11.2px;line-height:13px;color:#2a2a2a;white-space:nowrap;text-align:right;transform-origin:100% 0;transform:scaleX(0.965);">2</div>
<div style="position:absolute;right:422px;top:561px;font-size:11.2px;line-height:13px;color:#2a2a2a;white-space:nowrap;text-align:right;transform-origin:100% 0;transform:scaleX(0.965);">3</div>
<div style="position:absolute;right:297px;top:561px;font-size:11.2px;line-height:13px;color:#2a2a2a;white-space:nowrap;text-align:right;transform-origin:100% 0;transform:scaleX(0.965);">4</div>
<div style="position:absolute;right:172px;top:561px;font-size:11.2px;line-height:13px;color:#2a2a2a;white-space:nowrap;text-align:right;transform-origin:100% 0;transform:scaleX(0.965);">5</div>
<div style="position:absolute;right:47px;top:561px;font-size:11.2px;line-height:13px;color:#2a2a2a;white-space:nowrap;text-align:right;transform-origin:100% 0;transform:scaleX(0.965);">6</div>
<div style="position:absolute;left:472px;top:581px;width:871px;height:25px;background:linear-gradient(100deg,#d0d0d0 0%,#ececec 45%,#d8d8d8 75%,#c9c9c9 100%);border-top:1px solid #333;border-bottom:1px solid #333"></div>
<div style="position:absolute;left:868px;top:586px;font-size:12px;line-height:14px;height:14px;color:#333;white-space:nowrap;transform-origin:0 0;transform:scaleX(0.885);">Default: On Shift</div>
<div style="position:absolute;left:470px;top:659px;width:875px;height:105px;background:#e3e3e3"></div>
<div style="position:absolute;left:595px;top:659px;width:1px;height:105px;background:#d4d4d4"></div>
<div style="position:absolute;left:720px;top:659px;width:1px;height:105px;background:#d4d4d4"></div>
<div style="position:absolute;left:845px;top:659px;width:1px;height:105px;background:#d4d4d4"></div>
<div style="position:absolute;left:970px;top:659px;width:1px;height:105px;background:#d4d4d4"></div>
<div style="position:absolute;left:1095px;top:659px;width:1px;height:105px;background:#d4d4d4"></div>
<div style="position:absolute;left:1220px;top:659px;width:1px;height:105px;background:#d4d4d4"></div>
<div style="position:absolute;left:470px;top:763px;width:875px;height:1px;background:#d4d4d4"></div>
<div style="position:absolute;right:797px;top:664px;font-size:11.2px;line-height:13px;color:#2a2a2a;white-space:nowrap;text-align:right;transform-origin:100% 0;transform:scaleX(0.965);">7</div>
<div style="position:absolute;right:672px;top:664px;font-size:11.2px;line-height:13px;color:#2a2a2a;white-space:nowrap;text-align:right;transform-origin:100% 0;transform:scaleX(0.965);">8</div>
<div style="position:absolute;right:547px;top:664px;font-size:11.2px;line-height:13px;color:#2a2a2a;white-space:nowrap;text-align:right;transform-origin:100% 0;transform:scaleX(0.965);">9</div>
<div style="position:absolute;right:422px;top:664px;font-size:11.2px;line-height:13px;color:#2a2a2a;white-space:nowrap;text-align:right;transform-origin:100% 0;transform:scaleX(0.965);">10</div>
<div style="position:absolute;right:297px;top:664px;font-size:11.2px;line-height:13px;color:#2a2a2a;white-space:nowrap;text-align:right;transform-origin:100% 0;transform:scaleX(0.965);">11</div>
<div style="position:absolute;right:172px;top:664px;font-size:11.2px;line-height:13px;color:#2a2a2a;white-space:nowrap;text-align:right;transform-origin:100% 0;transform:scaleX(0.965);">12</div>
<div style="position:absolute;right:47px;top:664px;font-size:11.2px;line-height:13px;color:#2a2a2a;white-space:nowrap;text-align:right;transform-origin:100% 0;transform:scaleX(0.965);">13</div>
<div style="position:absolute;left:472px;top:684px;width:871px;height:25px;background:linear-gradient(100deg,#cccccc 0%,#dedede 45%,#d2d2d2 75%,#c8c8c8 100%);border-top:1px solid #333;border-bottom:1px solid #333"></div>
<div style="position:absolute;left:868px;top:689px;font-size:12px;line-height:14px;height:14px;color:#333;white-space:nowrap;transform-origin:0 0;transform:scaleX(0.885);">Default: On Shift</div>
<div style="position:absolute;left:1345px;top:224px;width:17px;height:540px;background:#e8e8e8"></div>
<div style="position:absolute;left:1345px;top:226px;width:17px;height:16px;background:#fff;border:1px solid #d6d6d6"></div>
<svg style="position:absolute;left:1349px;top:231px;" width="9" height="6" viewBox="0 0 9 6" fill="none" stroke="#444" stroke-width="1.5"><path d="M0.5 5 L4.5 0.5 L8.5 5 Z" fill="#777" stroke="none"/></svg>
<div style="position:absolute;left:1345px;top:490px;width:16px;height:23px;background:#fff;border:2px solid #c4c4c4"></div>
<div style="position:absolute;left:1345px;top:747px;width:17px;height:16px;background:#fff;border:1px solid #d6d6d6"></div>
<svg style="position:absolute;left:1349px;top:753px;" width="9" height="6" viewBox="0 0 9 6" fill="none" stroke="#444" stroke-width="1.5"><path d="M0.5 0.5 L4.5 5 L8.5 0.5 Z" fill="#777" stroke="none"/></svg>
<div style="position:absolute;left:1364px;top:173px;width:23px;height:592px;background:#f3f6fb;border-left:1px solid #e0e0e0"></div>
<div style="position:absolute;left:1366px;top:176px;width:21px;height:48px;background:#f0f0f0;border:1px solid #e0e0e0"></div>
<div style="position:absolute;left:1368px;top:181px;width:16px;height:40px;"><div style="position:absolute;left:16px;top:0;transform-origin:0 0;transform:rotate(90deg);font-size:11.3px;line-height:14px;color:#222;white-space:nowrap">Reports</div></div>
<div style="position:absolute;left:4px;top:766px;width:1383px;height:23px;background:#f0f0f0;border-top:1px solid #dadada"></div>
<div style="position:absolute;left:7px;top:772px;font-size:12px;line-height:14px;height:14px;color:#111;white-space:nowrap;transform-origin:0 0;transform:scaleX(0.945);">Ready</div>
<div style="position:absolute;right:19px;top:772px;font-size:12.5px;line-height:14px;color:#111;white-space:nowrap;text-align:right;transform-origin:100% 0;transform:scaleX(0.93);">Edit Operations</div>
<svg style="position:absolute;left:1374px;top:772px;" width="12" height="12" viewBox="0 0 12 12" fill="none" stroke="#444" stroke-width="1.5"><rect x="9" y="1" width="2" height="2" fill="#b0b0b0" stroke="none"/><rect x="6" y="4" width="2" height="2" fill="#b0b0b0" stroke="none"/><rect x="9" y="4" width="2" height="2" fill="#b0b0b0" stroke="none"/><rect x="3" y="7" width="2" height="2" fill="#b0b0b0" stroke="none"/><rect x="6" y="7" width="2" height="2" fill="#b0b0b0" stroke="none"/><rect x="9" y="7" width="2" height="2" fill="#b0b0b0" stroke="none"/><rect x="0" y="10" width="2" height="2" fill="#b0b0b0" stroke="none"/><rect x="3" y="10" width="2" height="2" fill="#b0b0b0" stroke="none"/><rect x="6" y="10" width="2" height="2" fill="#b0b0b0" stroke="none"/><rect x="9" y="10" width="2" height="2" fill="#b0b0b0" stroke="none"/></svg>
<div style="position:absolute;left:518px;top:280px;width:333px;height:458px;box-shadow:0 0 12px 2px rgba(0,0,0,0.28);"></div>
<div style="position:absolute;left:518px;top:280px;width:333px;height:459px;background:#fff;border:1px solid #555;border-right:2px solid #555;border-bottom:2px solid #555"></div>
<div style="position:absolute;left:527px;top:289px;width:14px;height:14px;background:#14958f"></div>
<div style="position:absolute;left:529px;top:287px;width:14px;height:14px;background:#9b1d58"></div>
<div style="position:absolute;left:529px;top:291px;width:14px;font-size:6.5px;line-height:8px;color:#fff;text-align:center;font-weight:bold;letter-spacing:-0.2px;-webkit-text-stroke:0">APS</div>
<div style="position:absolute;left:548px;top:289px;font-size:12.5px;line-height:14px;height:14px;color:#111;white-space:nowrap;transform-origin:0 0;transform:scaleX(0.93);">Calendar Period</div>
<svg style="position:absolute;left:828px;top:288px;" width="14" height="14" viewBox="0 0 14 14" fill="none" stroke="#444" stroke-width="1.5"><path d="M2 2 L12 12 M12 2 L2 12" stroke="#222" stroke-width="1.1"/></svg>
<div style="position:absolute;left:526px;top:325px;width:317px;height:120px;border:1px solid #d5dfe5;border-radius:4px"></div>
<div style="position:absolute;left:530px;top:318px;width:40px;height:14px;background:#fff"></div>
<div style="position:absolute;left:533px;top:319px;font-size:12.5px;line-height:14px;height:14px;color:#222;white-space:nowrap;transform-origin:0 0;transform:scaleX(0.93);">Period</div>
<div style="position:absolute;left:540px;top:345px;font-size:12.5px;line-height:14px;height:14px;color:#222;white-space:nowrap;transform-origin:0 0;transform:scaleX(0.93);">Template</div>
<div style="position:absolute;left:608px;top:338px;width:225px;height:25px;background:#e5e5e5;border:1px solid #adadad"></div>
<div style="position:absolute;left:615px;top:343px;font-size:12.5px;line-height:14px;height:14px;color:#111;white-space:nowrap;transform-origin:0 0;transform:scaleX(0.93);">Planned Maintenance</div>
<svg style="position:absolute;left:818px;top:347px;" width="10" height="6" viewBox="0 0 10 6" fill="none" stroke="#444" stroke-width="1.5"><path d="M1 1 L5 5 L9 1" stroke="#444" stroke-width="1"/></svg>
<div style="position:absolute;left:540px;top:381px;font-size:12.5px;line-height:14px;height:14px;color:#222;white-space:nowrap;transform-origin:0 0;transform:scaleX(0.93);">Start Time</div>
<div style="position:absolute;left:608px;top:374px;width:226px;height:25px;background:#fff;border:1px solid #c4c4c4"></div>
<div style="position:absolute;left:623px;top:381px;font-size:12.5px;line-height:14px;height:14px;color:#111;white-space:nowrap;transform-origin:0 0;transform:scaleX(0.93);">2000-01-14 08:00</div>
<svg style="position:absolute;left:810px;top:379px;" width="17" height="16" viewBox="0 0 17 16" fill="none" stroke="#444" stroke-width="1.5"><rect x="0.7" y="0.7" width="15.6" height="14.6" rx="2" stroke="#555" stroke-width="1.3"/><path d="M0.7 4 H16.3" stroke="#555" stroke-width="1.5"/><path d="M1 7.5 H16 M1 10.5 H16 M1 13 H16 M4 4 V15 M7 4 V15 M10 4 V15 M13 4 V15" stroke="#555" stroke-width="0.9"/></svg>
<div style="position:absolute;left:540px;top:417px;font-size:12.5px;line-height:14px;height:14px;color:#222;white-space:nowrap;transform-origin:0 0;transform:scaleX(0.93);">End Time</div>
<div style="position:absolute;left:608px;top:410px;width:226px;height:25px;background:#fff;border:1px solid #c4c4c4"></div>
<div style="position:absolute;left:623px;top:417px;font-size:12.5px;line-height:14px;height:14px;color:#111;white-space:nowrap;transform-origin:0 0;transform:scaleX(0.93);">2000-01-14 12:30</div>
<svg style="position:absolute;left:810px;top:415px;" width="17" height="16" viewBox="0 0 17 16" fill="none" stroke="#444" stroke-width="1.5"><rect x="0.7" y="0.7" width="15.6" height="14.6" rx="2" stroke="#555" stroke-width="1.3"/><path d="M0.7 4 H16.3" stroke="#555" stroke-width="1.5"/><path d="M1 7.5 H16 M1 10.5 H16 M1 13 H16 M4 4 V15 M7 4 V15 M10 4 V15 M13 4 V15" stroke="#555" stroke-width="0.9"/></svg>
<svg style="position:absolute;left:526px;top:459px;" width="19" height="19" viewBox="0 0 19 19" fill="none" stroke="#444" stroke-width="1.5"><circle cx="9.5" cy="9.5" r="8.7" stroke="#333" stroke-width="1.2"/><path d="M6 8 L9.5 11.5 L13 8" stroke="#333" stroke-width="1.6"/></svg>
<div style="position:absolute;left:549px;top:462px;font-size:12.5px;line-height:14px;height:14px;color:#222;white-space:nowrap;transform-origin:0 0;transform:scaleX(0.93);">Details</div>
<svg style="position:absolute;left:526px;top:492px;" width="19" height="19" viewBox="0 0 19 19" fill="none" stroke="#444" stroke-width="1.5"><circle cx="9.5" cy="9.5" r="8.7" stroke="#333" stroke-width="1.2"/><path d="M6 11 L9.5 7.5 L13 11" stroke="#333" stroke-width="1.6"/></svg>
<div style="position:absolute;left:549px;top:495px;font-size:12.5px;line-height:14px;height:14px;color:#222;white-space:nowrap;transform-origin:0 0;transform:scaleX(0.93);">Apply Changes to Resources</div>
<div style="position:absolute;left:526px;top:513px;width:316px;height:173px;border:1px solid #d5dfe5;border-radius:4px"></div>
<div style="position:absolute;left:532px;top:518px;width:304px;height:23px;background:#f2f2f2;border:1px solid #dadada"></div>
<div style="position:absolute;left:543px;top:523px;width:14px;height:14px;background:#fff;border:1px solid #333"></div>
<div style="position:absolute;left:562px;top:523px;font-size:12.5px;line-height:14px;height:14px;color:#222;white-space:nowrap;transform-origin:0 0;transform:scaleX(0.93);">Component Assembly</div>
<div style="position:absolute;left:543px;top:546px;width:14px;height:14px;background:#fff;border:1px solid #333"></div>
<div style="position:absolute;left:562px;top:546px;font-size:12.5px;line-height:14px;height:14px;color:#222;white-space:nowrap;transform-origin:0 0;transform:scaleX(0.93);">Metal Worker 1</div>
<div style="position:absolute;left:532px;top:564px;width:304px;height:23px;background:#f2f2f2;border:1px solid #dadada"></div>
<div style="position:absolute;left:543px;top:569px;width:14px;height:14px;background:#fff;border:1px solid #333"></div>
<div style="position:absolute;left:562px;top:569px;font-size:12.5px;line-height:14px;height:14px;color:#222;white-space:nowrap;transform-origin:0 0;transform:scaleX(0.93);">Painting</div>
<div style="position:absolute;left:532px;top:587px;width:304px;height:23px;background:#f2f2f2;border:1px solid #dadada"></div>
<div style="position:absolute;left:543px;top:592px;width:14px;height:14px;background:#fff;border:1px solid #333"></div>
<svg style="position:absolute;left:543px;top:592px;" width="14" height="14" viewBox="0 0 14 14" fill="none" stroke="#444" stroke-width="1.5"><path d="M3 7 L6 10.5 L11.5 3" stroke="#111" stroke-width="1.8"/></svg>
<div style="position:absolute;left:562px;top:592px;font-size:12.5px;line-height:14px;height:14px;color:#222;white-space:nowrap;transform-origin:0 0;transform:scaleX(0.93);">Final Assembly</div>
<div style="position:absolute;left:543px;top:615px;width:14px;height:14px;background:#fff;border:1px solid #333"></div>
<div style="position:absolute;left:562px;top:615px;font-size:12.5px;line-height:14px;height:14px;color:#222;white-space:nowrap;transform-origin:0 0;transform:scaleX(0.93);">Welder 2</div>
<div style="position:absolute;left:532px;top:633px;width:304px;height:23px;background:#f2f2f2;border:1px solid #dadada"></div>
<div style="position:absolute;left:543px;top:638px;width:14px;height:14px;background:#fff;border:1px solid #333"></div>
<div style="position:absolute;left:562px;top:638px;font-size:12.5px;line-height:14px;height:14px;color:#222;white-space:nowrap;transform-origin:0 0;transform:scaleX(0.93);">Welder 1</div>
<div style="position:absolute;left:543px;top:661px;width:14px;height:14px;background:#fff;border:1px solid #333"></div>
<div style="position:absolute;left:562px;top:661px;font-size:12.5px;line-height:14px;height:14px;color:#222;white-space:nowrap;transform-origin:0 0;transform:scaleX(0.93);">Metal Worker 2</div>
<div style="position:absolute;left:668px;top:699px;width:80px;height:28px;background:#e1e1e1;border:1px solid #adadad"></div>
<div style="position:absolute;left:608px;width:200px;top:706px;font-size:12.5px;line-height:14px;color:#111;white-space:nowrap;text-align:center;transform-origin:50% 0;transform:scaleX(0.93);">OK</div>
<div style="position:absolute;left:758px;top:699px;width:80px;height:28px;background:#e1e1e1;border:1px solid #adadad"></div>
<div style="position:absolute;left:698px;width:200px;top:706px;font-size:12.5px;line-height:14px;color:#111;white-space:nowrap;text-align:center;transform-origin:50% 0;transform:scaleX(0.93);">Cancel</div>
<div style="position:absolute;left:417px;top:672px;width:173px;height:97px;box-shadow:2px 2px 3px rgba(0,0,0,0.35);"></div>
<div style="position:absolute;left:416px;top:671px;width:174px;height:98px;background:#f2f2f2;border:1px solid #a0a0a0"></div>
<div style="position:absolute;left:448px;top:673px;width:1px;height:94px;background:#e0e0e0"></div>
<div style="position:absolute;left:450px;top:720px;width:136px;height:1px;background:#d7d7d7"></div>
<div style="position:absolute;left:420px;top:723px;width:167px;height:22px;background:#c3dfee;border:1px solid #3fa1dc"></div>
<div style="position:absolute;left:455px;top:679px;font-size:12.5px;line-height:14px;height:14px;color:#111;white-space:nowrap;transform-origin:0 0;transform:scaleX(0.93);">Check</div>
<div style="position:absolute;left:455px;top:701px;font-size:12.5px;line-height:14px;height:14px;color:#111;white-space:nowrap;transform-origin:0 0;transform:scaleX(0.93);">Uncheck</div>
<div style="position:absolute;left:455px;top:728px;font-size:12.5px;line-height:14px;height:14px;color:#111;white-space:nowrap;transform-origin:0 0;transform:scaleX(0.93);">Select All</div>
<div style="position:absolute;left:455px;top:750px;font-size:12.5px;line-height:14px;height:14px;color:#111;white-space:nowrap;transform-origin:0 0;transform:scaleX(0.93);">Invert Selection</div>
<svg style="position:absolute;left:0;top:0" width="1389" height="789"><g stroke="#e31b1f" stroke-width="4.6" stroke-linecap="round"><path d="M363.5 216.7 L1011 284.5"/><path d="M678 443.9 L1033 335.5"/><path d="M401 752 L612 752"/></g></svg>
</body></html>
